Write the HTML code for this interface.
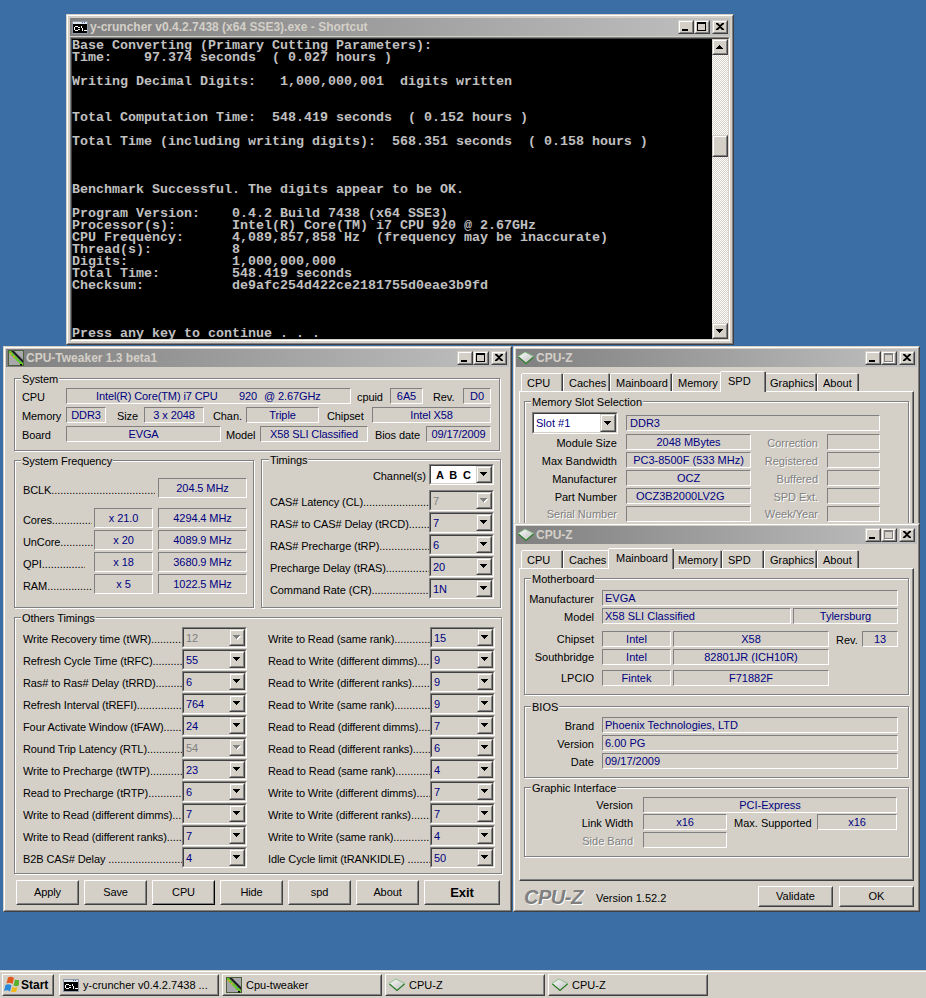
<!DOCTYPE html><html><head><meta charset="utf-8"><style>
html,body{margin:0;padding:0}
body{width:926px;height:998px;overflow:hidden;background:#3a6ea5;position:relative}
body div,body svg{position:absolute}
</style></head><body>
<div style="left:66px;top:14px;width:668px;height:331px;box-sizing:border-box;border-style:solid;border-width:1px;border-color:#d4d0c8 #404040 #404040 #d4d0c8;"><div style="position:absolute;left:0;top:0;right:0;bottom:0;border-style:solid;border-width:1px;border-color:#ffffff #808080 #808080 #ffffff;background:#d4d0c8"></div></div>
<div style="left:70px;top:18px;width:660px;height:18px;background:linear-gradient(to right,#808080,#c0c0c0);"></div>
<svg style="position:absolute;left:72px;top:19px" width="16" height="16" shape-rendering="crispEdges"><rect x="0" y="2" width="16" height="13" fill="#8e98a6"/><rect x="1" y="3" width="14" height="2" fill="#dfe6ee"/><rect x="10" y="3" width="1" height="1" fill="#4a6ab0"/><rect x="12" y="3" width="1" height="1" fill="#4a6ab0"/><rect x="1" y="5" width="14" height="9" fill="#000"/><path d="M3 7h3v1h-3zM2 8h1v3h-1zM3 11h3v1h-3zM6 8h1v1h-1zM6 10h1v1h-1zM7 8h1v1h-1zM7 10h1v1h-1zM9 7h1v2h-1zM10 9h1v3h-1zM12 11h3v1h-3z" fill="#fff"/></svg>
<div style="left:90px;top:21px;font:bold 12px 'Liberation Sans',sans-serif;line-height:13px;color:#d4d0c8;white-space:pre">y-cruncher v0.4.2.7438 (x64 SSE3).exe - Shortcut</div>
<div style="left:712px;top:20px;width:16px;height:14px;box-sizing:border-box;border-style:solid;border-width:1px;border-color:#d4d0c8 #404040 #404040 #d4d0c8;"><div style="position:absolute;left:0;top:0;right:0;bottom:0;border-style:solid;border-width:1px;border-color:#ffffff #808080 #808080 #ffffff;background:#d4d0c8"></div></div>
<svg style="position:absolute;left:716px;top:23px" width="8" height="7"><path d="M0 0h2l2 2 2-2h2v1l-3 2.5 3 2.5v1h-2l-2-2-2 2h-2v-1l3-2.5-3-2.5z" fill="#000"/></svg>
<div style="left:694px;top:20px;width:16px;height:14px;box-sizing:border-box;border-style:solid;border-width:1px;border-color:#d4d0c8 #404040 #404040 #d4d0c8;"><div style="position:absolute;left:0;top:0;right:0;bottom:0;border-style:solid;border-width:1px;border-color:#ffffff #808080 #808080 #ffffff;background:#d4d0c8"></div></div>
<div style="left:697px;top:22px;width:9px;height:9px;box-sizing:border-box;border:1px solid #000;border-top-width:2px"></div>
<div style="left:678px;top:20px;width:16px;height:14px;box-sizing:border-box;border-style:solid;border-width:1px;border-color:#d4d0c8 #404040 #404040 #d4d0c8;"><div style="position:absolute;left:0;top:0;right:0;bottom:0;border-style:solid;border-width:1px;border-color:#ffffff #808080 #808080 #ffffff;background:#d4d0c8"></div></div>
<div style="left:682px;top:29px;width:6px;height:2px;background:#000;"></div>
<div style="left:70px;top:37px;width:660px;height:304px;box-sizing:border-box;border-style:solid;border-width:1px;border-color:#808080 #ffffff #ffffff #808080;"><div style="position:absolute;left:0;top:0;right:0;bottom:0;border-style:solid;border-width:1px;border-color:#404040 #d4d0c8 #d4d0c8 #404040;background:#000"></div></div>
<div style="left:72px;top:40px;width:640px;height:299px;font:bold 13.33px 'Liberation Mono',monospace;line-height:12px;color:#c0c0c0;white-space:pre;overflow:hidden">Base Converting (Primary Cutting Parameters):
Time:    97.374 seconds  ( 0.027 hours )

Writing Decimal Digits:   1,000,000,001  digits written


Total Computation Time:  548.419 seconds  ( 0.152 hours )

Total Time (including writing digits):  568.351 seconds  ( 0.158 hours )



Benchmark Successful. The digits appear to be OK.

Program Version:    0.4.2 Build 7438 (x64 SSE3)
Processor(s):       Intel(R) Core(TM) i7 CPU 920 @ 2.67GHz
CPU Frequency:      4,089,857,858 Hz  (frequency may be inaccurate)
Thread(s):          8
Digits:             1,000,000,000
Total Time:         548.419 seconds
Checksum:           de9afc254d422ce2181755d0eae3b9fd



Press any key to continue . . .</div>
<div style="left:712px;top:39px;width:16px;height:300px;background:repeating-conic-gradient(#fff 0 25%,#d4d0c8 0 50%) 0 0/2px 2px;"></div>
<div style="left:712px;top:39px;width:16px;height:16px;box-sizing:border-box;border-style:solid;border-width:1px;border-color:#d4d0c8 #404040 #404040 #d4d0c8;"><div style="position:absolute;left:0;top:0;right:0;bottom:0;border-style:solid;border-width:1px;border-color:#ffffff #808080 #808080 #ffffff;background:#d4d0c8"></div></div>
<svg style="position:absolute;left:716px;top:45px" width="7" height="4"><polygon points="0,4 7,4 3.5,0" fill="#000" shape-rendering="crispEdges"/></svg>
<div style="left:712px;top:323px;width:16px;height:16px;box-sizing:border-box;border-style:solid;border-width:1px;border-color:#d4d0c8 #404040 #404040 #d4d0c8;"><div style="position:absolute;left:0;top:0;right:0;bottom:0;border-style:solid;border-width:1px;border-color:#ffffff #808080 #808080 #ffffff;background:#d4d0c8"></div></div>
<svg style="position:absolute;left:716px;top:329px" width="7" height="4"><path d="M0 0h7v1h-1v1h-1v1h-1v1h-1v-1h-1v-1h-1v-1h-1z" fill="#000"/></svg>
<div style="left:712px;top:135px;width:16px;height:22px;box-sizing:border-box;border-style:solid;border-width:1px;border-color:#d4d0c8 #404040 #404040 #d4d0c8;"><div style="position:absolute;left:0;top:0;right:0;bottom:0;border-style:solid;border-width:1px;border-color:#ffffff #808080 #808080 #ffffff;background:#d4d0c8"></div></div>
<div style="left:3px;top:346px;width:509px;height:566px;box-sizing:border-box;border-style:solid;border-width:1px;border-color:#d4d0c8 #404040 #404040 #d4d0c8;"><div style="position:absolute;left:0;top:0;right:0;bottom:0;border-style:solid;border-width:1px;border-color:#ffffff #808080 #808080 #ffffff;background:#d4d0c8"></div></div>
<div style="left:6px;top:349px;width:503px;height:18px;background:linear-gradient(to right,#808080,#c0c0c0);"></div>
<svg style="position:absolute;left:8px;top:350px" width="16" height="16"><rect x="0.5" y="0.5" width="15" height="15" fill="#a8a8ac" stroke="#4c5e3a"/><polygon points="1,1 3,1 15,13 15,15 13,15 1,3" fill="#64c828"/><polygon points="3,1 6,1 15,10 15,13" fill="#1c1c24"/><rect x="6" y="5" width="1" height="1" fill="#8aa080"/><rect x="9" y="8" width="1" height="1" fill="#8aa080"/><rect x="11" y="10" width="1" height="1" fill="#6080b0"/><rect x="2" y="3" width="1.5" height="1.5" fill="#f0a020"/><rect x="5" y="6" width="1.5" height="1.5" fill="#f0a020"/><rect x="12" y="14" width="2" height="1.5" fill="#000"/></svg>
<div style="left:26px;top:352px;font:bold 12px 'Liberation Sans',sans-serif;line-height:13px;color:#d4d0c8;white-space:pre">CPU-Tweaker 1.3 beta1</div>
<div style="left:491px;top:351px;width:16px;height:14px;box-sizing:border-box;border-style:solid;border-width:1px;border-color:#d4d0c8 #404040 #404040 #d4d0c8;"><div style="position:absolute;left:0;top:0;right:0;bottom:0;border-style:solid;border-width:1px;border-color:#ffffff #808080 #808080 #ffffff;background:#d4d0c8"></div></div>
<svg style="position:absolute;left:495px;top:354px" width="8" height="7"><path d="M0 0h2l2 2 2-2h2v1l-3 2.5 3 2.5v1h-2l-2-2-2 2h-2v-1l3-2.5-3-2.5z" fill="#000"/></svg>
<div style="left:473px;top:351px;width:16px;height:14px;box-sizing:border-box;border-style:solid;border-width:1px;border-color:#d4d0c8 #404040 #404040 #d4d0c8;"><div style="position:absolute;left:0;top:0;right:0;bottom:0;border-style:solid;border-width:1px;border-color:#ffffff #808080 #808080 #ffffff;background:#d4d0c8"></div></div>
<div style="left:476px;top:353px;width:9px;height:9px;box-sizing:border-box;border:1px solid #000;border-top-width:2px"></div>
<div style="left:457px;top:351px;width:16px;height:14px;box-sizing:border-box;border-style:solid;border-width:1px;border-color:#d4d0c8 #404040 #404040 #d4d0c8;"><div style="position:absolute;left:0;top:0;right:0;bottom:0;border-style:solid;border-width:1px;border-color:#ffffff #808080 #808080 #ffffff;background:#d4d0c8"></div></div>
<div style="left:461px;top:360px;width:6px;height:2px;background:#000;"></div>
<div style="left:15px;top:379px;width:486px;height:73px;box-sizing:border-box;border:1px solid #ffffff"></div>
<div style="left:14px;top:378px;width:486px;height:73px;box-sizing:border-box;border:1px solid #808080"></div>
<div style="left:21px;top:373px;height:13px;padding:0 1px;background:#d4d0c8;font:11px 'Liberation Sans',sans-serif;line-height:13px;color:#000;white-space:pre;letter-spacing:-0.1px">System</div>
<div style="left:22px;top:391px;font:11px 'Liberation Sans',sans-serif;line-height:13px;color:#000;white-space:pre;letter-spacing:-0.1px;">CPU</div>
<div style="left:66px;top:388px;width:285px;height:16px;box-sizing:border-box;border-style:solid;border-width:1px;border-color:#808080 #ffffff #ffffff #808080;"></div>
<div style="left:96px;top:390px;font:11px 'Liberation Sans',sans-serif;line-height:13px;color:#000080;white-space:pre;letter-spacing:-0.1px;">Intel(R) Core(TM) i7 CPU</div>
<div style="left:239px;top:390px;font:11px 'Liberation Sans',sans-serif;line-height:13px;color:#000080;white-space:pre;letter-spacing:-0.1px;">920</div>
<div style="left:264px;top:390px;font:11px 'Liberation Sans',sans-serif;line-height:13px;color:#000080;white-space:pre;letter-spacing:-0.1px;">@ 2.67GHz</div>
<div style="left:357px;top:391px;font:11px 'Liberation Sans',sans-serif;line-height:13px;color:#000;white-space:pre;letter-spacing:-0.1px;">cpuid</div>
<div style="left:390px;top:388px;width:33px;height:16px;box-sizing:border-box;border-style:solid;border-width:1px;border-color:#808080 #ffffff #ffffff #808080;"></div>
<div style="left:390px;top:390px;font:11px 'Liberation Sans',sans-serif;line-height:13px;color:#000080;white-space:pre;letter-spacing:-0.1px;width:33px;text-align:center;">6A5</div>
<div style="left:433px;top:391px;font:11px 'Liberation Sans',sans-serif;line-height:13px;color:#000;white-space:pre;letter-spacing:-0.1px;">Rev.</div>
<div style="left:463px;top:388px;width:28px;height:16px;box-sizing:border-box;border-style:solid;border-width:1px;border-color:#808080 #ffffff #ffffff #808080;"></div>
<div style="left:463px;top:390px;font:11px 'Liberation Sans',sans-serif;line-height:13px;color:#000080;white-space:pre;letter-spacing:-0.1px;width:28px;text-align:center;">D0</div>
<div style="left:22px;top:410px;font:11px 'Liberation Sans',sans-serif;line-height:13px;color:#000;white-space:pre;letter-spacing:-0.1px;">Memory</div>
<div style="left:66px;top:407px;width:40px;height:16px;box-sizing:border-box;border-style:solid;border-width:1px;border-color:#808080 #ffffff #ffffff #808080;"></div>
<div style="left:66px;top:409px;font:11px 'Liberation Sans',sans-serif;line-height:13px;color:#000080;white-space:pre;letter-spacing:-0.1px;width:40px;text-align:center;">DDR3</div>
<div style="left:117px;top:410px;font:11px 'Liberation Sans',sans-serif;line-height:13px;color:#000;white-space:pre;letter-spacing:-0.1px;">Size</div>
<div style="left:144px;top:407px;width:60px;height:16px;box-sizing:border-box;border-style:solid;border-width:1px;border-color:#808080 #ffffff #ffffff #808080;"></div>
<div style="left:144px;top:409px;font:11px 'Liberation Sans',sans-serif;line-height:13px;color:#000080;white-space:pre;letter-spacing:-0.1px;width:60px;text-align:center;">3 x 2048</div>
<div style="left:213px;top:410px;font:11px 'Liberation Sans',sans-serif;line-height:13px;color:#000;white-space:pre;letter-spacing:-0.1px;">Chan.</div>
<div style="left:246px;top:407px;width:73px;height:16px;box-sizing:border-box;border-style:solid;border-width:1px;border-color:#808080 #ffffff #ffffff #808080;"></div>
<div style="left:246px;top:409px;font:11px 'Liberation Sans',sans-serif;line-height:13px;color:#000080;white-space:pre;letter-spacing:-0.1px;width:73px;text-align:center;">Triple</div>
<div style="left:327px;top:410px;font:11px 'Liberation Sans',sans-serif;line-height:13px;color:#000;white-space:pre;letter-spacing:-0.1px;">Chipset</div>
<div style="left:372px;top:407px;width:119px;height:16px;box-sizing:border-box;border-style:solid;border-width:1px;border-color:#808080 #ffffff #ffffff #808080;"></div>
<div style="left:372px;top:409px;font:11px 'Liberation Sans',sans-serif;line-height:13px;color:#000080;white-space:pre;letter-spacing:-0.1px;width:119px;text-align:center;">Intel X58</div>
<div style="left:22px;top:429px;font:11px 'Liberation Sans',sans-serif;line-height:13px;color:#000;white-space:pre;letter-spacing:-0.1px;">Board</div>
<div style="left:66px;top:426px;width:155px;height:16px;box-sizing:border-box;border-style:solid;border-width:1px;border-color:#808080 #ffffff #ffffff #808080;"></div>
<div style="left:66px;top:428px;font:11px 'Liberation Sans',sans-serif;line-height:13px;color:#000080;white-space:pre;letter-spacing:-0.1px;width:155px;text-align:center;">EVGA</div>
<div style="left:226px;top:429px;font:11px 'Liberation Sans',sans-serif;line-height:13px;color:#000;white-space:pre;letter-spacing:-0.1px;">Model</div>
<div style="left:260px;top:426px;width:108px;height:16px;box-sizing:border-box;border-style:solid;border-width:1px;border-color:#808080 #ffffff #ffffff #808080;"></div>
<div style="left:260px;top:428px;font:11px 'Liberation Sans',sans-serif;line-height:13px;color:#000080;white-space:pre;letter-spacing:-0.1px;width:108px;text-align:center;">X58 SLI Classified</div>
<div style="left:375px;top:429px;font:11px 'Liberation Sans',sans-serif;line-height:13px;color:#000;white-space:pre;letter-spacing:-0.1px;">Bios date</div>
<div style="left:426px;top:426px;width:65px;height:16px;box-sizing:border-box;border-style:solid;border-width:1px;border-color:#808080 #ffffff #ffffff #808080;"></div>
<div style="left:426px;top:428px;font:11px 'Liberation Sans',sans-serif;line-height:13px;color:#000080;white-space:pre;letter-spacing:-0.1px;width:65px;text-align:center;">09/17/2009</div>
<div style="left:15px;top:461px;width:240px;height:148px;box-sizing:border-box;border:1px solid #ffffff"></div>
<div style="left:14px;top:460px;width:240px;height:148px;box-sizing:border-box;border:1px solid #808080"></div>
<div style="left:21px;top:455px;height:13px;padding:0 1px;background:#d4d0c8;font:11px 'Liberation Sans',sans-serif;line-height:13px;color:#000;white-space:pre;letter-spacing:-0.1px">System Frequency</div>
<div style="left:23px;top:484px;width:132px;overflow:hidden;font:11px 'Liberation Sans',sans-serif;line-height:13px;color:#000;white-space:pre"><span style="letter-spacing:-0.1px">BCLK</span><span style="letter-spacing:-0.06px">................................................................................</span></div>
<div style="left:158px;top:478px;width:89px;height:20px;box-sizing:border-box;border-style:solid;border-width:1px;border-color:#808080 #ffffff #ffffff #808080;"></div>
<div style="left:158px;top:482px;font:11px 'Liberation Sans',sans-serif;line-height:13px;color:#000080;white-space:pre;letter-spacing:-0.1px;width:89px;text-align:center;">204.5 MHz</div>
<div style="left:23px;top:514px;width:69px;overflow:hidden;font:11px 'Liberation Sans',sans-serif;line-height:13px;color:#000;white-space:pre"><span style="letter-spacing:-0.1px">Cores</span><span style="letter-spacing:-0.06px">................................................................................</span></div>
<div style="left:94px;top:508px;width:59px;height:20px;box-sizing:border-box;border-style:solid;border-width:1px;border-color:#808080 #ffffff #ffffff #808080;"></div>
<div style="left:94px;top:512px;font:11px 'Liberation Sans',sans-serif;line-height:13px;color:#000080;white-space:pre;letter-spacing:-0.1px;width:59px;text-align:center;">x 21.0</div>
<div style="left:158px;top:508px;width:89px;height:20px;box-sizing:border-box;border-style:solid;border-width:1px;border-color:#808080 #ffffff #ffffff #808080;"></div>
<div style="left:158px;top:512px;font:11px 'Liberation Sans',sans-serif;line-height:13px;color:#000080;white-space:pre;letter-spacing:-0.1px;width:89px;text-align:center;">4294.4 MHz</div>
<div style="left:23px;top:536px;width:70px;overflow:hidden;font:11px 'Liberation Sans',sans-serif;line-height:13px;color:#000;white-space:pre"><span style="letter-spacing:-0.1px">UnCore</span><span style="letter-spacing:-0.06px">................................................................................</span></div>
<div style="left:94px;top:530px;width:59px;height:20px;box-sizing:border-box;border-style:solid;border-width:1px;border-color:#808080 #ffffff #ffffff #808080;"></div>
<div style="left:94px;top:534px;font:11px 'Liberation Sans',sans-serif;line-height:13px;color:#000080;white-space:pre;letter-spacing:-0.1px;width:59px;text-align:center;">x 20</div>
<div style="left:158px;top:530px;width:89px;height:20px;box-sizing:border-box;border-style:solid;border-width:1px;border-color:#808080 #ffffff #ffffff #808080;"></div>
<div style="left:158px;top:534px;font:11px 'Liberation Sans',sans-serif;line-height:13px;color:#000080;white-space:pre;letter-spacing:-0.1px;width:89px;text-align:center;">4089.9 MHz</div>
<div style="left:23px;top:558px;width:62px;overflow:hidden;font:11px 'Liberation Sans',sans-serif;line-height:13px;color:#000;white-space:pre"><span style="letter-spacing:-0.1px">QPI</span><span style="letter-spacing:-0.06px">................................................................................</span></div>
<div style="left:94px;top:552px;width:59px;height:20px;box-sizing:border-box;border-style:solid;border-width:1px;border-color:#808080 #ffffff #ffffff #808080;"></div>
<div style="left:94px;top:556px;font:11px 'Liberation Sans',sans-serif;line-height:13px;color:#000080;white-space:pre;letter-spacing:-0.1px;width:59px;text-align:center;">x 18</div>
<div style="left:158px;top:552px;width:89px;height:20px;box-sizing:border-box;border-style:solid;border-width:1px;border-color:#808080 #ffffff #ffffff #808080;"></div>
<div style="left:158px;top:556px;font:11px 'Liberation Sans',sans-serif;line-height:13px;color:#000080;white-space:pre;letter-spacing:-0.1px;width:89px;text-align:center;">3680.9 MHz</div>
<div style="left:23px;top:580px;width:69px;overflow:hidden;font:11px 'Liberation Sans',sans-serif;line-height:13px;color:#000;white-space:pre"><span style="letter-spacing:-0.1px">RAM</span><span style="letter-spacing:-0.06px">................................................................................</span></div>
<div style="left:94px;top:574px;width:59px;height:20px;box-sizing:border-box;border-style:solid;border-width:1px;border-color:#808080 #ffffff #ffffff #808080;"></div>
<div style="left:94px;top:578px;font:11px 'Liberation Sans',sans-serif;line-height:13px;color:#000080;white-space:pre;letter-spacing:-0.1px;width:59px;text-align:center;">x 5</div>
<div style="left:158px;top:574px;width:89px;height:20px;box-sizing:border-box;border-style:solid;border-width:1px;border-color:#808080 #ffffff #ffffff #808080;"></div>
<div style="left:158px;top:578px;font:11px 'Liberation Sans',sans-serif;line-height:13px;color:#000080;white-space:pre;letter-spacing:-0.1px;width:89px;text-align:center;">1022.5 MHz</div>
<div style="left:262px;top:460px;width:240px;height:149px;box-sizing:border-box;border:1px solid #ffffff"></div>
<div style="left:261px;top:459px;width:240px;height:149px;box-sizing:border-box;border:1px solid #808080"></div>
<div style="left:269px;top:454px;height:13px;padding:0 1px;background:#d4d0c8;font:11px 'Liberation Sans',sans-serif;line-height:13px;color:#000;white-space:pre;letter-spacing:-0.1px">Timings</div>
<div style="left:373px;top:470px;font:11px 'Liberation Sans',sans-serif;line-height:13px;color:#000;white-space:pre;letter-spacing:-0.1px;">Channel(s)</div>
<div style="left:429px;top:464px;width:65px;height:21px;box-sizing:border-box;border-style:solid;border-width:1px;border-color:#808080 #ffffff #ffffff #808080;"><div style="position:absolute;left:0;top:0;right:0;bottom:0;border-style:solid;border-width:1px;border-color:#404040 #d4d0c8 #d4d0c8 #404040;background:#ffffff"></div></div>
<div style="left:476px;top:466px;width:16px;height:17px;box-sizing:border-box;border-style:solid;border-width:1px;border-color:#d4d0c8 #404040 #404040 #d4d0c8;"><div style="position:absolute;left:0;top:0;right:0;bottom:0;border-style:solid;border-width:1px;border-color:#ffffff #808080 #808080 #ffffff;background:#d4d0c8"></div></div>
<svg style="position:absolute;left:480px;top:472px" width="7" height="4"><path d="M0 0h7v1h-1v1h-1v1h-1v1h-1v-1h-1v-1h-1v-1h-1z" fill="#000" shape-rendering="crispEdges"/></svg>
<div style="left:436px;top:469px;font:bold 11px 'Liberation Sans',sans-serif;line-height:13px;color:#000;white-space:pre;letter-spacing:-0.1px;">A  B  C</div>
<div style="left:270px;top:496px;width:159px;overflow:hidden;font:11px 'Liberation Sans',sans-serif;line-height:13px;color:#000;white-space:pre"><span style="letter-spacing:-0.1px">CAS# Latency (CL)</span><span style="letter-spacing:-0.06px">................................................................................</span></div>
<div style="left:429px;top:490px;width:65px;height:21px;box-sizing:border-box;border-style:solid;border-width:1px;border-color:#808080 #ffffff #ffffff #808080;"><div style="position:absolute;left:0;top:0;right:0;bottom:0;border-style:solid;border-width:1px;border-color:#404040 #d4d0c8 #d4d0c8 #404040;background:#d4d0c8"></div></div>
<div style="left:476px;top:492px;width:16px;height:17px;box-sizing:border-box;border-style:solid;border-width:1px;border-color:#d4d0c8 #404040 #404040 #d4d0c8;"><div style="position:absolute;left:0;top:0;right:0;bottom:0;border-style:solid;border-width:1px;border-color:#ffffff #808080 #808080 #ffffff;background:#d4d0c8"></div></div>
<svg style="position:absolute;left:480px;top:498px" width="9" height="5"><path d="M1 1h7v1h-1v1h-1v1h-1v1h-1v-1" fill="#fff" shape-rendering="crispEdges"/><path d="M0 0h7v1h-1v1h-1v1h-1v1h-1v-1h-1v-1h-1v-1h-1z" fill="#808080" shape-rendering="crispEdges"/></svg>
<div style="left:433px;top:495px;font:11px 'Liberation Sans',sans-serif;line-height:13px;color:#808080;white-space:pre;letter-spacing:-0.1px;">7</div>
<div style="left:270px;top:518px;width:159px;overflow:hidden;font:11px 'Liberation Sans',sans-serif;line-height:13px;color:#000;white-space:pre"><span style="letter-spacing:-0.1px">RAS# to CAS# Delay (tRCD)</span><span style="letter-spacing:-0.06px">................................................................................</span></div>
<div style="left:429px;top:512px;width:65px;height:21px;box-sizing:border-box;border-style:solid;border-width:1px;border-color:#808080 #ffffff #ffffff #808080;"><div style="position:absolute;left:0;top:0;right:0;bottom:0;border-style:solid;border-width:1px;border-color:#404040 #d4d0c8 #d4d0c8 #404040;background:#d4d0c8"></div></div>
<div style="left:476px;top:514px;width:16px;height:17px;box-sizing:border-box;border-style:solid;border-width:1px;border-color:#d4d0c8 #404040 #404040 #d4d0c8;"><div style="position:absolute;left:0;top:0;right:0;bottom:0;border-style:solid;border-width:1px;border-color:#ffffff #808080 #808080 #ffffff;background:#d4d0c8"></div></div>
<svg style="position:absolute;left:480px;top:520px" width="7" height="4"><path d="M0 0h7v1h-1v1h-1v1h-1v1h-1v-1h-1v-1h-1v-1h-1z" fill="#000" shape-rendering="crispEdges"/></svg>
<div style="left:433px;top:517px;font:11px 'Liberation Sans',sans-serif;line-height:13px;color:#000080;white-space:pre;letter-spacing:-0.1px;">7</div>
<div style="left:270px;top:540px;width:159px;overflow:hidden;font:11px 'Liberation Sans',sans-serif;line-height:13px;color:#000;white-space:pre"><span style="letter-spacing:-0.1px">RAS# Precharge (tRP)</span><span style="letter-spacing:-0.06px">................................................................................</span></div>
<div style="left:429px;top:534px;width:65px;height:21px;box-sizing:border-box;border-style:solid;border-width:1px;border-color:#808080 #ffffff #ffffff #808080;"><div style="position:absolute;left:0;top:0;right:0;bottom:0;border-style:solid;border-width:1px;border-color:#404040 #d4d0c8 #d4d0c8 #404040;background:#d4d0c8"></div></div>
<div style="left:476px;top:536px;width:16px;height:17px;box-sizing:border-box;border-style:solid;border-width:1px;border-color:#d4d0c8 #404040 #404040 #d4d0c8;"><div style="position:absolute;left:0;top:0;right:0;bottom:0;border-style:solid;border-width:1px;border-color:#ffffff #808080 #808080 #ffffff;background:#d4d0c8"></div></div>
<svg style="position:absolute;left:480px;top:542px" width="7" height="4"><path d="M0 0h7v1h-1v1h-1v1h-1v1h-1v-1h-1v-1h-1v-1h-1z" fill="#000" shape-rendering="crispEdges"/></svg>
<div style="left:433px;top:539px;font:11px 'Liberation Sans',sans-serif;line-height:13px;color:#000080;white-space:pre;letter-spacing:-0.1px;">6</div>
<div style="left:270px;top:562px;width:159px;overflow:hidden;font:11px 'Liberation Sans',sans-serif;line-height:13px;color:#000;white-space:pre"><span style="letter-spacing:-0.1px">Precharge Delay (tRAS)</span><span style="letter-spacing:-0.06px">................................................................................</span></div>
<div style="left:429px;top:556px;width:65px;height:21px;box-sizing:border-box;border-style:solid;border-width:1px;border-color:#808080 #ffffff #ffffff #808080;"><div style="position:absolute;left:0;top:0;right:0;bottom:0;border-style:solid;border-width:1px;border-color:#404040 #d4d0c8 #d4d0c8 #404040;background:#d4d0c8"></div></div>
<div style="left:476px;top:558px;width:16px;height:17px;box-sizing:border-box;border-style:solid;border-width:1px;border-color:#d4d0c8 #404040 #404040 #d4d0c8;"><div style="position:absolute;left:0;top:0;right:0;bottom:0;border-style:solid;border-width:1px;border-color:#ffffff #808080 #808080 #ffffff;background:#d4d0c8"></div></div>
<svg style="position:absolute;left:480px;top:564px" width="7" height="4"><path d="M0 0h7v1h-1v1h-1v1h-1v1h-1v-1h-1v-1h-1v-1h-1z" fill="#000" shape-rendering="crispEdges"/></svg>
<div style="left:433px;top:561px;font:11px 'Liberation Sans',sans-serif;line-height:13px;color:#000080;white-space:pre;letter-spacing:-0.1px;">20</div>
<div style="left:270px;top:584px;width:159px;overflow:hidden;font:11px 'Liberation Sans',sans-serif;line-height:13px;color:#000;white-space:pre"><span style="letter-spacing:-0.1px">Command Rate (CR)</span><span style="letter-spacing:-0.06px">................................................................................</span></div>
<div style="left:429px;top:578px;width:65px;height:21px;box-sizing:border-box;border-style:solid;border-width:1px;border-color:#808080 #ffffff #ffffff #808080;"><div style="position:absolute;left:0;top:0;right:0;bottom:0;border-style:solid;border-width:1px;border-color:#404040 #d4d0c8 #d4d0c8 #404040;background:#d4d0c8"></div></div>
<div style="left:476px;top:580px;width:16px;height:17px;box-sizing:border-box;border-style:solid;border-width:1px;border-color:#d4d0c8 #404040 #404040 #d4d0c8;"><div style="position:absolute;left:0;top:0;right:0;bottom:0;border-style:solid;border-width:1px;border-color:#ffffff #808080 #808080 #ffffff;background:#d4d0c8"></div></div>
<svg style="position:absolute;left:480px;top:586px" width="7" height="4"><path d="M0 0h7v1h-1v1h-1v1h-1v1h-1v-1h-1v-1h-1v-1h-1z" fill="#000" shape-rendering="crispEdges"/></svg>
<div style="left:433px;top:583px;font:11px 'Liberation Sans',sans-serif;line-height:13px;color:#000080;white-space:pre;letter-spacing:-0.1px;">1N</div>
<div style="left:15px;top:618px;width:488px;height:257px;box-sizing:border-box;border:1px solid #ffffff"></div>
<div style="left:14px;top:617px;width:488px;height:257px;box-sizing:border-box;border:1px solid #808080"></div>
<div style="left:21px;top:612px;height:13px;padding:0 1px;background:#d4d0c8;font:11px 'Liberation Sans',sans-serif;line-height:13px;color:#000;white-space:pre;letter-spacing:-0.1px">Others Timings</div>
<div style="left:23px;top:633px;width:159px;overflow:hidden;font:11px 'Liberation Sans',sans-serif;line-height:13px;color:#000;white-space:pre"><span style="letter-spacing:-0.1px">Write Recovery time (tWR)</span><span style="letter-spacing:-0.06px">................................................................................</span></div>
<div style="left:182px;top:627px;width:65px;height:21px;box-sizing:border-box;border-style:solid;border-width:1px;border-color:#808080 #ffffff #ffffff #808080;"><div style="position:absolute;left:0;top:0;right:0;bottom:0;border-style:solid;border-width:1px;border-color:#404040 #d4d0c8 #d4d0c8 #404040;background:#d4d0c8"></div></div>
<div style="left:229px;top:629px;width:16px;height:17px;box-sizing:border-box;border-style:solid;border-width:1px;border-color:#d4d0c8 #404040 #404040 #d4d0c8;"><div style="position:absolute;left:0;top:0;right:0;bottom:0;border-style:solid;border-width:1px;border-color:#ffffff #808080 #808080 #ffffff;background:#d4d0c8"></div></div>
<svg style="position:absolute;left:233px;top:635px" width="9" height="5"><path d="M1 1h7v1h-1v1h-1v1h-1v1h-1v-1" fill="#fff" shape-rendering="crispEdges"/><path d="M0 0h7v1h-1v1h-1v1h-1v1h-1v-1h-1v-1h-1v-1h-1z" fill="#808080" shape-rendering="crispEdges"/></svg>
<div style="left:186px;top:632px;font:11px 'Liberation Sans',sans-serif;line-height:13px;color:#808080;white-space:pre;letter-spacing:-0.1px;">12</div>
<div style="left:23px;top:655px;width:159px;overflow:hidden;font:11px 'Liberation Sans',sans-serif;line-height:13px;color:#000;white-space:pre"><span style="letter-spacing:-0.1px">Refresh Cycle Time (tRFC)</span><span style="letter-spacing:-0.06px">................................................................................</span></div>
<div style="left:182px;top:649px;width:65px;height:21px;box-sizing:border-box;border-style:solid;border-width:1px;border-color:#808080 #ffffff #ffffff #808080;"><div style="position:absolute;left:0;top:0;right:0;bottom:0;border-style:solid;border-width:1px;border-color:#404040 #d4d0c8 #d4d0c8 #404040;background:#d4d0c8"></div></div>
<div style="left:229px;top:651px;width:16px;height:17px;box-sizing:border-box;border-style:solid;border-width:1px;border-color:#d4d0c8 #404040 #404040 #d4d0c8;"><div style="position:absolute;left:0;top:0;right:0;bottom:0;border-style:solid;border-width:1px;border-color:#ffffff #808080 #808080 #ffffff;background:#d4d0c8"></div></div>
<svg style="position:absolute;left:233px;top:657px" width="7" height="4"><path d="M0 0h7v1h-1v1h-1v1h-1v1h-1v-1h-1v-1h-1v-1h-1z" fill="#000" shape-rendering="crispEdges"/></svg>
<div style="left:186px;top:654px;font:11px 'Liberation Sans',sans-serif;line-height:13px;color:#000080;white-space:pre;letter-spacing:-0.1px;">55</div>
<div style="left:23px;top:677px;width:159px;overflow:hidden;font:11px 'Liberation Sans',sans-serif;line-height:13px;color:#000;white-space:pre"><span style="letter-spacing:-0.1px">Ras# to Ras# Delay (tRRD)</span><span style="letter-spacing:-0.06px">................................................................................</span></div>
<div style="left:182px;top:671px;width:65px;height:21px;box-sizing:border-box;border-style:solid;border-width:1px;border-color:#808080 #ffffff #ffffff #808080;"><div style="position:absolute;left:0;top:0;right:0;bottom:0;border-style:solid;border-width:1px;border-color:#404040 #d4d0c8 #d4d0c8 #404040;background:#d4d0c8"></div></div>
<div style="left:229px;top:673px;width:16px;height:17px;box-sizing:border-box;border-style:solid;border-width:1px;border-color:#d4d0c8 #404040 #404040 #d4d0c8;"><div style="position:absolute;left:0;top:0;right:0;bottom:0;border-style:solid;border-width:1px;border-color:#ffffff #808080 #808080 #ffffff;background:#d4d0c8"></div></div>
<svg style="position:absolute;left:233px;top:679px" width="7" height="4"><path d="M0 0h7v1h-1v1h-1v1h-1v1h-1v-1h-1v-1h-1v-1h-1z" fill="#000" shape-rendering="crispEdges"/></svg>
<div style="left:186px;top:676px;font:11px 'Liberation Sans',sans-serif;line-height:13px;color:#000080;white-space:pre;letter-spacing:-0.1px;">6</div>
<div style="left:23px;top:699px;width:159px;overflow:hidden;font:11px 'Liberation Sans',sans-serif;line-height:13px;color:#000;white-space:pre"><span style="letter-spacing:-0.1px">Refresh Interval (tREFI)</span><span style="letter-spacing:-0.06px">................................................................................</span></div>
<div style="left:182px;top:693px;width:65px;height:21px;box-sizing:border-box;border-style:solid;border-width:1px;border-color:#808080 #ffffff #ffffff #808080;"><div style="position:absolute;left:0;top:0;right:0;bottom:0;border-style:solid;border-width:1px;border-color:#404040 #d4d0c8 #d4d0c8 #404040;background:#d4d0c8"></div></div>
<div style="left:229px;top:695px;width:16px;height:17px;box-sizing:border-box;border-style:solid;border-width:1px;border-color:#d4d0c8 #404040 #404040 #d4d0c8;"><div style="position:absolute;left:0;top:0;right:0;bottom:0;border-style:solid;border-width:1px;border-color:#ffffff #808080 #808080 #ffffff;background:#d4d0c8"></div></div>
<svg style="position:absolute;left:233px;top:701px" width="7" height="4"><path d="M0 0h7v1h-1v1h-1v1h-1v1h-1v-1h-1v-1h-1v-1h-1z" fill="#000" shape-rendering="crispEdges"/></svg>
<div style="left:186px;top:698px;font:11px 'Liberation Sans',sans-serif;line-height:13px;color:#000080;white-space:pre;letter-spacing:-0.1px;">764</div>
<div style="left:23px;top:721px;width:159px;overflow:hidden;font:11px 'Liberation Sans',sans-serif;line-height:13px;color:#000;white-space:pre"><span style="letter-spacing:-0.1px">Four Activate Window (tFAW)</span><span style="letter-spacing:-0.06px">................................................................................</span></div>
<div style="left:182px;top:715px;width:65px;height:21px;box-sizing:border-box;border-style:solid;border-width:1px;border-color:#808080 #ffffff #ffffff #808080;"><div style="position:absolute;left:0;top:0;right:0;bottom:0;border-style:solid;border-width:1px;border-color:#404040 #d4d0c8 #d4d0c8 #404040;background:#d4d0c8"></div></div>
<div style="left:229px;top:717px;width:16px;height:17px;box-sizing:border-box;border-style:solid;border-width:1px;border-color:#d4d0c8 #404040 #404040 #d4d0c8;"><div style="position:absolute;left:0;top:0;right:0;bottom:0;border-style:solid;border-width:1px;border-color:#ffffff #808080 #808080 #ffffff;background:#d4d0c8"></div></div>
<svg style="position:absolute;left:233px;top:723px" width="7" height="4"><path d="M0 0h7v1h-1v1h-1v1h-1v1h-1v-1h-1v-1h-1v-1h-1z" fill="#000" shape-rendering="crispEdges"/></svg>
<div style="left:186px;top:720px;font:11px 'Liberation Sans',sans-serif;line-height:13px;color:#000080;white-space:pre;letter-spacing:-0.1px;">24</div>
<div style="left:23px;top:743px;width:159px;overflow:hidden;font:11px 'Liberation Sans',sans-serif;line-height:13px;color:#000;white-space:pre"><span style="letter-spacing:-0.1px">Round Trip Latency (RTL)</span><span style="letter-spacing:-0.06px">................................................................................</span></div>
<div style="left:182px;top:737px;width:65px;height:21px;box-sizing:border-box;border-style:solid;border-width:1px;border-color:#808080 #ffffff #ffffff #808080;"><div style="position:absolute;left:0;top:0;right:0;bottom:0;border-style:solid;border-width:1px;border-color:#404040 #d4d0c8 #d4d0c8 #404040;background:#d4d0c8"></div></div>
<div style="left:229px;top:739px;width:16px;height:17px;box-sizing:border-box;border-style:solid;border-width:1px;border-color:#d4d0c8 #404040 #404040 #d4d0c8;"><div style="position:absolute;left:0;top:0;right:0;bottom:0;border-style:solid;border-width:1px;border-color:#ffffff #808080 #808080 #ffffff;background:#d4d0c8"></div></div>
<svg style="position:absolute;left:233px;top:745px" width="9" height="5"><path d="M1 1h7v1h-1v1h-1v1h-1v1h-1v-1" fill="#fff" shape-rendering="crispEdges"/><path d="M0 0h7v1h-1v1h-1v1h-1v1h-1v-1h-1v-1h-1v-1h-1z" fill="#808080" shape-rendering="crispEdges"/></svg>
<div style="left:186px;top:742px;font:11px 'Liberation Sans',sans-serif;line-height:13px;color:#808080;white-space:pre;letter-spacing:-0.1px;">54</div>
<div style="left:23px;top:765px;width:159px;overflow:hidden;font:11px 'Liberation Sans',sans-serif;line-height:13px;color:#000;white-space:pre"><span style="letter-spacing:-0.1px">Write to Precharge (tWTP)</span><span style="letter-spacing:-0.06px">................................................................................</span></div>
<div style="left:182px;top:759px;width:65px;height:21px;box-sizing:border-box;border-style:solid;border-width:1px;border-color:#808080 #ffffff #ffffff #808080;"><div style="position:absolute;left:0;top:0;right:0;bottom:0;border-style:solid;border-width:1px;border-color:#404040 #d4d0c8 #d4d0c8 #404040;background:#d4d0c8"></div></div>
<div style="left:229px;top:761px;width:16px;height:17px;box-sizing:border-box;border-style:solid;border-width:1px;border-color:#d4d0c8 #404040 #404040 #d4d0c8;"><div style="position:absolute;left:0;top:0;right:0;bottom:0;border-style:solid;border-width:1px;border-color:#ffffff #808080 #808080 #ffffff;background:#d4d0c8"></div></div>
<svg style="position:absolute;left:233px;top:767px" width="7" height="4"><path d="M0 0h7v1h-1v1h-1v1h-1v1h-1v-1h-1v-1h-1v-1h-1z" fill="#000" shape-rendering="crispEdges"/></svg>
<div style="left:186px;top:764px;font:11px 'Liberation Sans',sans-serif;line-height:13px;color:#000080;white-space:pre;letter-spacing:-0.1px;">23</div>
<div style="left:23px;top:787px;width:159px;overflow:hidden;font:11px 'Liberation Sans',sans-serif;line-height:13px;color:#000;white-space:pre"><span style="letter-spacing:-0.1px">Read to Precharge (tRTP)</span><span style="letter-spacing:-0.06px">................................................................................</span></div>
<div style="left:182px;top:781px;width:65px;height:21px;box-sizing:border-box;border-style:solid;border-width:1px;border-color:#808080 #ffffff #ffffff #808080;"><div style="position:absolute;left:0;top:0;right:0;bottom:0;border-style:solid;border-width:1px;border-color:#404040 #d4d0c8 #d4d0c8 #404040;background:#d4d0c8"></div></div>
<div style="left:229px;top:783px;width:16px;height:17px;box-sizing:border-box;border-style:solid;border-width:1px;border-color:#d4d0c8 #404040 #404040 #d4d0c8;"><div style="position:absolute;left:0;top:0;right:0;bottom:0;border-style:solid;border-width:1px;border-color:#ffffff #808080 #808080 #ffffff;background:#d4d0c8"></div></div>
<svg style="position:absolute;left:233px;top:789px" width="7" height="4"><path d="M0 0h7v1h-1v1h-1v1h-1v1h-1v-1h-1v-1h-1v-1h-1z" fill="#000" shape-rendering="crispEdges"/></svg>
<div style="left:186px;top:786px;font:11px 'Liberation Sans',sans-serif;line-height:13px;color:#000080;white-space:pre;letter-spacing:-0.1px;">6</div>
<div style="left:23px;top:809px;width:159px;overflow:hidden;font:11px 'Liberation Sans',sans-serif;line-height:13px;color:#000;white-space:pre"><span style="letter-spacing:-0.1px">Write to Read (different dimms)</span><span style="letter-spacing:-0.06px">................................................................................</span></div>
<div style="left:182px;top:803px;width:65px;height:21px;box-sizing:border-box;border-style:solid;border-width:1px;border-color:#808080 #ffffff #ffffff #808080;"><div style="position:absolute;left:0;top:0;right:0;bottom:0;border-style:solid;border-width:1px;border-color:#404040 #d4d0c8 #d4d0c8 #404040;background:#d4d0c8"></div></div>
<div style="left:229px;top:805px;width:16px;height:17px;box-sizing:border-box;border-style:solid;border-width:1px;border-color:#d4d0c8 #404040 #404040 #d4d0c8;"><div style="position:absolute;left:0;top:0;right:0;bottom:0;border-style:solid;border-width:1px;border-color:#ffffff #808080 #808080 #ffffff;background:#d4d0c8"></div></div>
<svg style="position:absolute;left:233px;top:811px" width="7" height="4"><path d="M0 0h7v1h-1v1h-1v1h-1v1h-1v-1h-1v-1h-1v-1h-1z" fill="#000" shape-rendering="crispEdges"/></svg>
<div style="left:186px;top:808px;font:11px 'Liberation Sans',sans-serif;line-height:13px;color:#000080;white-space:pre;letter-spacing:-0.1px;">7</div>
<div style="left:23px;top:831px;width:159px;overflow:hidden;font:11px 'Liberation Sans',sans-serif;line-height:13px;color:#000;white-space:pre"><span style="letter-spacing:-0.1px">Write to Read (different ranks)</span><span style="letter-spacing:-0.06px">................................................................................</span></div>
<div style="left:182px;top:825px;width:65px;height:21px;box-sizing:border-box;border-style:solid;border-width:1px;border-color:#808080 #ffffff #ffffff #808080;"><div style="position:absolute;left:0;top:0;right:0;bottom:0;border-style:solid;border-width:1px;border-color:#404040 #d4d0c8 #d4d0c8 #404040;background:#d4d0c8"></div></div>
<div style="left:229px;top:827px;width:16px;height:17px;box-sizing:border-box;border-style:solid;border-width:1px;border-color:#d4d0c8 #404040 #404040 #d4d0c8;"><div style="position:absolute;left:0;top:0;right:0;bottom:0;border-style:solid;border-width:1px;border-color:#ffffff #808080 #808080 #ffffff;background:#d4d0c8"></div></div>
<svg style="position:absolute;left:233px;top:833px" width="7" height="4"><path d="M0 0h7v1h-1v1h-1v1h-1v1h-1v-1h-1v-1h-1v-1h-1z" fill="#000" shape-rendering="crispEdges"/></svg>
<div style="left:186px;top:830px;font:11px 'Liberation Sans',sans-serif;line-height:13px;color:#000080;white-space:pre;letter-spacing:-0.1px;">7</div>
<div style="left:23px;top:853px;width:159px;overflow:hidden;font:11px 'Liberation Sans',sans-serif;line-height:13px;color:#000;white-space:pre"><span style="letter-spacing:-0.1px">B2B CAS# Delay </span><span style="letter-spacing:-0.06px">................................................................................</span></div>
<div style="left:182px;top:847px;width:65px;height:21px;box-sizing:border-box;border-style:solid;border-width:1px;border-color:#808080 #ffffff #ffffff #808080;"><div style="position:absolute;left:0;top:0;right:0;bottom:0;border-style:solid;border-width:1px;border-color:#404040 #d4d0c8 #d4d0c8 #404040;background:#d4d0c8"></div></div>
<div style="left:229px;top:849px;width:16px;height:17px;box-sizing:border-box;border-style:solid;border-width:1px;border-color:#d4d0c8 #404040 #404040 #d4d0c8;"><div style="position:absolute;left:0;top:0;right:0;bottom:0;border-style:solid;border-width:1px;border-color:#ffffff #808080 #808080 #ffffff;background:#d4d0c8"></div></div>
<svg style="position:absolute;left:233px;top:855px" width="7" height="4"><path d="M0 0h7v1h-1v1h-1v1h-1v1h-1v-1h-1v-1h-1v-1h-1z" fill="#000" shape-rendering="crispEdges"/></svg>
<div style="left:186px;top:852px;font:11px 'Liberation Sans',sans-serif;line-height:13px;color:#000080;white-space:pre;letter-spacing:-0.1px;">4</div>
<div style="left:268px;top:633px;width:162px;overflow:hidden;font:11px 'Liberation Sans',sans-serif;line-height:13px;color:#000;white-space:pre"><span style="letter-spacing:-0.1px">Write to Read (same rank)</span><span style="letter-spacing:-0.06px">................................................................................</span></div>
<div style="left:430px;top:627px;width:65px;height:21px;box-sizing:border-box;border-style:solid;border-width:1px;border-color:#808080 #ffffff #ffffff #808080;"><div style="position:absolute;left:0;top:0;right:0;bottom:0;border-style:solid;border-width:1px;border-color:#404040 #d4d0c8 #d4d0c8 #404040;background:#d4d0c8"></div></div>
<div style="left:477px;top:629px;width:16px;height:17px;box-sizing:border-box;border-style:solid;border-width:1px;border-color:#d4d0c8 #404040 #404040 #d4d0c8;"><div style="position:absolute;left:0;top:0;right:0;bottom:0;border-style:solid;border-width:1px;border-color:#ffffff #808080 #808080 #ffffff;background:#d4d0c8"></div></div>
<svg style="position:absolute;left:481px;top:635px" width="7" height="4"><path d="M0 0h7v1h-1v1h-1v1h-1v1h-1v-1h-1v-1h-1v-1h-1z" fill="#000" shape-rendering="crispEdges"/></svg>
<div style="left:434px;top:632px;font:11px 'Liberation Sans',sans-serif;line-height:13px;color:#000080;white-space:pre;letter-spacing:-0.1px;">15</div>
<div style="left:268px;top:655px;width:162px;overflow:hidden;font:11px 'Liberation Sans',sans-serif;line-height:13px;color:#000;white-space:pre"><span style="letter-spacing:-0.1px">Read to Write (different dimms)</span><span style="letter-spacing:-0.06px">................................................................................</span></div>
<div style="left:430px;top:649px;width:65px;height:21px;box-sizing:border-box;border-style:solid;border-width:1px;border-color:#808080 #ffffff #ffffff #808080;"><div style="position:absolute;left:0;top:0;right:0;bottom:0;border-style:solid;border-width:1px;border-color:#404040 #d4d0c8 #d4d0c8 #404040;background:#d4d0c8"></div></div>
<div style="left:477px;top:651px;width:16px;height:17px;box-sizing:border-box;border-style:solid;border-width:1px;border-color:#d4d0c8 #404040 #404040 #d4d0c8;"><div style="position:absolute;left:0;top:0;right:0;bottom:0;border-style:solid;border-width:1px;border-color:#ffffff #808080 #808080 #ffffff;background:#d4d0c8"></div></div>
<svg style="position:absolute;left:481px;top:657px" width="7" height="4"><path d="M0 0h7v1h-1v1h-1v1h-1v1h-1v-1h-1v-1h-1v-1h-1z" fill="#000" shape-rendering="crispEdges"/></svg>
<div style="left:434px;top:654px;font:11px 'Liberation Sans',sans-serif;line-height:13px;color:#000080;white-space:pre;letter-spacing:-0.1px;">9</div>
<div style="left:268px;top:677px;width:162px;overflow:hidden;font:11px 'Liberation Sans',sans-serif;line-height:13px;color:#000;white-space:pre"><span style="letter-spacing:-0.1px">Read to Write (different ranks)</span><span style="letter-spacing:-0.06px">................................................................................</span></div>
<div style="left:430px;top:671px;width:65px;height:21px;box-sizing:border-box;border-style:solid;border-width:1px;border-color:#808080 #ffffff #ffffff #808080;"><div style="position:absolute;left:0;top:0;right:0;bottom:0;border-style:solid;border-width:1px;border-color:#404040 #d4d0c8 #d4d0c8 #404040;background:#d4d0c8"></div></div>
<div style="left:477px;top:673px;width:16px;height:17px;box-sizing:border-box;border-style:solid;border-width:1px;border-color:#d4d0c8 #404040 #404040 #d4d0c8;"><div style="position:absolute;left:0;top:0;right:0;bottom:0;border-style:solid;border-width:1px;border-color:#ffffff #808080 #808080 #ffffff;background:#d4d0c8"></div></div>
<svg style="position:absolute;left:481px;top:679px" width="7" height="4"><path d="M0 0h7v1h-1v1h-1v1h-1v1h-1v-1h-1v-1h-1v-1h-1z" fill="#000" shape-rendering="crispEdges"/></svg>
<div style="left:434px;top:676px;font:11px 'Liberation Sans',sans-serif;line-height:13px;color:#000080;white-space:pre;letter-spacing:-0.1px;">9</div>
<div style="left:268px;top:699px;width:162px;overflow:hidden;font:11px 'Liberation Sans',sans-serif;line-height:13px;color:#000;white-space:pre"><span style="letter-spacing:-0.1px">Read to Write (same rank)</span><span style="letter-spacing:-0.06px">................................................................................</span></div>
<div style="left:430px;top:693px;width:65px;height:21px;box-sizing:border-box;border-style:solid;border-width:1px;border-color:#808080 #ffffff #ffffff #808080;"><div style="position:absolute;left:0;top:0;right:0;bottom:0;border-style:solid;border-width:1px;border-color:#404040 #d4d0c8 #d4d0c8 #404040;background:#d4d0c8"></div></div>
<div style="left:477px;top:695px;width:16px;height:17px;box-sizing:border-box;border-style:solid;border-width:1px;border-color:#d4d0c8 #404040 #404040 #d4d0c8;"><div style="position:absolute;left:0;top:0;right:0;bottom:0;border-style:solid;border-width:1px;border-color:#ffffff #808080 #808080 #ffffff;background:#d4d0c8"></div></div>
<svg style="position:absolute;left:481px;top:701px" width="7" height="4"><path d="M0 0h7v1h-1v1h-1v1h-1v1h-1v-1h-1v-1h-1v-1h-1z" fill="#000" shape-rendering="crispEdges"/></svg>
<div style="left:434px;top:698px;font:11px 'Liberation Sans',sans-serif;line-height:13px;color:#000080;white-space:pre;letter-spacing:-0.1px;">9</div>
<div style="left:268px;top:721px;width:162px;overflow:hidden;font:11px 'Liberation Sans',sans-serif;line-height:13px;color:#000;white-space:pre"><span style="letter-spacing:-0.1px">Read to Read (different dimms)</span><span style="letter-spacing:-0.06px">................................................................................</span></div>
<div style="left:430px;top:715px;width:65px;height:21px;box-sizing:border-box;border-style:solid;border-width:1px;border-color:#808080 #ffffff #ffffff #808080;"><div style="position:absolute;left:0;top:0;right:0;bottom:0;border-style:solid;border-width:1px;border-color:#404040 #d4d0c8 #d4d0c8 #404040;background:#d4d0c8"></div></div>
<div style="left:477px;top:717px;width:16px;height:17px;box-sizing:border-box;border-style:solid;border-width:1px;border-color:#d4d0c8 #404040 #404040 #d4d0c8;"><div style="position:absolute;left:0;top:0;right:0;bottom:0;border-style:solid;border-width:1px;border-color:#ffffff #808080 #808080 #ffffff;background:#d4d0c8"></div></div>
<svg style="position:absolute;left:481px;top:723px" width="7" height="4"><path d="M0 0h7v1h-1v1h-1v1h-1v1h-1v-1h-1v-1h-1v-1h-1z" fill="#000" shape-rendering="crispEdges"/></svg>
<div style="left:434px;top:720px;font:11px 'Liberation Sans',sans-serif;line-height:13px;color:#000080;white-space:pre;letter-spacing:-0.1px;">7</div>
<div style="left:268px;top:743px;width:162px;overflow:hidden;font:11px 'Liberation Sans',sans-serif;line-height:13px;color:#000;white-space:pre"><span style="letter-spacing:-0.1px">Read to Read (different ranks)</span><span style="letter-spacing:-0.06px">................................................................................</span></div>
<div style="left:430px;top:737px;width:65px;height:21px;box-sizing:border-box;border-style:solid;border-width:1px;border-color:#808080 #ffffff #ffffff #808080;"><div style="position:absolute;left:0;top:0;right:0;bottom:0;border-style:solid;border-width:1px;border-color:#404040 #d4d0c8 #d4d0c8 #404040;background:#d4d0c8"></div></div>
<div style="left:477px;top:739px;width:16px;height:17px;box-sizing:border-box;border-style:solid;border-width:1px;border-color:#d4d0c8 #404040 #404040 #d4d0c8;"><div style="position:absolute;left:0;top:0;right:0;bottom:0;border-style:solid;border-width:1px;border-color:#ffffff #808080 #808080 #ffffff;background:#d4d0c8"></div></div>
<svg style="position:absolute;left:481px;top:745px" width="7" height="4"><path d="M0 0h7v1h-1v1h-1v1h-1v1h-1v-1h-1v-1h-1v-1h-1z" fill="#000" shape-rendering="crispEdges"/></svg>
<div style="left:434px;top:742px;font:11px 'Liberation Sans',sans-serif;line-height:13px;color:#000080;white-space:pre;letter-spacing:-0.1px;">6</div>
<div style="left:268px;top:765px;width:162px;overflow:hidden;font:11px 'Liberation Sans',sans-serif;line-height:13px;color:#000;white-space:pre"><span style="letter-spacing:-0.1px">Read to Read (same rank)</span><span style="letter-spacing:-0.06px">................................................................................</span></div>
<div style="left:430px;top:759px;width:65px;height:21px;box-sizing:border-box;border-style:solid;border-width:1px;border-color:#808080 #ffffff #ffffff #808080;"><div style="position:absolute;left:0;top:0;right:0;bottom:0;border-style:solid;border-width:1px;border-color:#404040 #d4d0c8 #d4d0c8 #404040;background:#d4d0c8"></div></div>
<div style="left:477px;top:761px;width:16px;height:17px;box-sizing:border-box;border-style:solid;border-width:1px;border-color:#d4d0c8 #404040 #404040 #d4d0c8;"><div style="position:absolute;left:0;top:0;right:0;bottom:0;border-style:solid;border-width:1px;border-color:#ffffff #808080 #808080 #ffffff;background:#d4d0c8"></div></div>
<svg style="position:absolute;left:481px;top:767px" width="7" height="4"><path d="M0 0h7v1h-1v1h-1v1h-1v1h-1v-1h-1v-1h-1v-1h-1z" fill="#000" shape-rendering="crispEdges"/></svg>
<div style="left:434px;top:764px;font:11px 'Liberation Sans',sans-serif;line-height:13px;color:#000080;white-space:pre;letter-spacing:-0.1px;">4</div>
<div style="left:268px;top:787px;width:162px;overflow:hidden;font:11px 'Liberation Sans',sans-serif;line-height:13px;color:#000;white-space:pre"><span style="letter-spacing:-0.1px">Write to Write (different dimms)</span><span style="letter-spacing:-0.06px">................................................................................</span></div>
<div style="left:430px;top:781px;width:65px;height:21px;box-sizing:border-box;border-style:solid;border-width:1px;border-color:#808080 #ffffff #ffffff #808080;"><div style="position:absolute;left:0;top:0;right:0;bottom:0;border-style:solid;border-width:1px;border-color:#404040 #d4d0c8 #d4d0c8 #404040;background:#d4d0c8"></div></div>
<div style="left:477px;top:783px;width:16px;height:17px;box-sizing:border-box;border-style:solid;border-width:1px;border-color:#d4d0c8 #404040 #404040 #d4d0c8;"><div style="position:absolute;left:0;top:0;right:0;bottom:0;border-style:solid;border-width:1px;border-color:#ffffff #808080 #808080 #ffffff;background:#d4d0c8"></div></div>
<svg style="position:absolute;left:481px;top:789px" width="7" height="4"><path d="M0 0h7v1h-1v1h-1v1h-1v1h-1v-1h-1v-1h-1v-1h-1z" fill="#000" shape-rendering="crispEdges"/></svg>
<div style="left:434px;top:786px;font:11px 'Liberation Sans',sans-serif;line-height:13px;color:#000080;white-space:pre;letter-spacing:-0.1px;">7</div>
<div style="left:268px;top:809px;width:162px;overflow:hidden;font:11px 'Liberation Sans',sans-serif;line-height:13px;color:#000;white-space:pre"><span style="letter-spacing:-0.1px">Write to Write (different ranks)</span><span style="letter-spacing:-0.06px">................................................................................</span></div>
<div style="left:430px;top:803px;width:65px;height:21px;box-sizing:border-box;border-style:solid;border-width:1px;border-color:#808080 #ffffff #ffffff #808080;"><div style="position:absolute;left:0;top:0;right:0;bottom:0;border-style:solid;border-width:1px;border-color:#404040 #d4d0c8 #d4d0c8 #404040;background:#d4d0c8"></div></div>
<div style="left:477px;top:805px;width:16px;height:17px;box-sizing:border-box;border-style:solid;border-width:1px;border-color:#d4d0c8 #404040 #404040 #d4d0c8;"><div style="position:absolute;left:0;top:0;right:0;bottom:0;border-style:solid;border-width:1px;border-color:#ffffff #808080 #808080 #ffffff;background:#d4d0c8"></div></div>
<svg style="position:absolute;left:481px;top:811px" width="7" height="4"><path d="M0 0h7v1h-1v1h-1v1h-1v1h-1v-1h-1v-1h-1v-1h-1z" fill="#000" shape-rendering="crispEdges"/></svg>
<div style="left:434px;top:808px;font:11px 'Liberation Sans',sans-serif;line-height:13px;color:#000080;white-space:pre;letter-spacing:-0.1px;">7</div>
<div style="left:268px;top:831px;width:162px;overflow:hidden;font:11px 'Liberation Sans',sans-serif;line-height:13px;color:#000;white-space:pre"><span style="letter-spacing:-0.1px">Write to Write (same rank)</span><span style="letter-spacing:-0.06px">................................................................................</span></div>
<div style="left:430px;top:825px;width:65px;height:21px;box-sizing:border-box;border-style:solid;border-width:1px;border-color:#808080 #ffffff #ffffff #808080;"><div style="position:absolute;left:0;top:0;right:0;bottom:0;border-style:solid;border-width:1px;border-color:#404040 #d4d0c8 #d4d0c8 #404040;background:#d4d0c8"></div></div>
<div style="left:477px;top:827px;width:16px;height:17px;box-sizing:border-box;border-style:solid;border-width:1px;border-color:#d4d0c8 #404040 #404040 #d4d0c8;"><div style="position:absolute;left:0;top:0;right:0;bottom:0;border-style:solid;border-width:1px;border-color:#ffffff #808080 #808080 #ffffff;background:#d4d0c8"></div></div>
<svg style="position:absolute;left:481px;top:833px" width="7" height="4"><path d="M0 0h7v1h-1v1h-1v1h-1v1h-1v-1h-1v-1h-1v-1h-1z" fill="#000" shape-rendering="crispEdges"/></svg>
<div style="left:434px;top:830px;font:11px 'Liberation Sans',sans-serif;line-height:13px;color:#000080;white-space:pre;letter-spacing:-0.1px;">4</div>
<div style="left:268px;top:853px;width:162px;overflow:hidden;font:11px 'Liberation Sans',sans-serif;line-height:13px;color:#000;white-space:pre"><span style="letter-spacing:-0.1px">Idle Cycle limit (tRANKIDLE) </span><span style="letter-spacing:-0.06px">................................................................................</span></div>
<div style="left:430px;top:847px;width:65px;height:21px;box-sizing:border-box;border-style:solid;border-width:1px;border-color:#808080 #ffffff #ffffff #808080;"><div style="position:absolute;left:0;top:0;right:0;bottom:0;border-style:solid;border-width:1px;border-color:#404040 #d4d0c8 #d4d0c8 #404040;background:#d4d0c8"></div></div>
<div style="left:477px;top:849px;width:16px;height:17px;box-sizing:border-box;border-style:solid;border-width:1px;border-color:#d4d0c8 #404040 #404040 #d4d0c8;"><div style="position:absolute;left:0;top:0;right:0;bottom:0;border-style:solid;border-width:1px;border-color:#ffffff #808080 #808080 #ffffff;background:#d4d0c8"></div></div>
<svg style="position:absolute;left:481px;top:855px" width="7" height="4"><path d="M0 0h7v1h-1v1h-1v1h-1v1h-1v-1h-1v-1h-1v-1h-1z" fill="#000" shape-rendering="crispEdges"/></svg>
<div style="left:434px;top:852px;font:11px 'Liberation Sans',sans-serif;line-height:13px;color:#000080;white-space:pre;letter-spacing:-0.1px;">50</div>
<div style="left:16px;top:880px;width:63px;height:25px;box-sizing:border-box;border-style:solid;border-width:1px;border-color:#ffffff #404040 #404040 #ffffff;"><div style="position:absolute;left:0;top:0;right:0;bottom:0;border-style:solid;border-width:1px;border-color:#d4d0c8 #808080 #808080 #d4d0c8;background:#d4d0c8"></div></div>
<div style="left:16px;top:886px;font:11px 'Liberation Sans',sans-serif;line-height:13px;color:#000;white-space:pre;letter-spacing:-0.1px;width:63px;text-align:center;">Apply</div>
<div style="left:84px;top:880px;width:63px;height:25px;box-sizing:border-box;border-style:solid;border-width:1px;border-color:#ffffff #404040 #404040 #ffffff;"><div style="position:absolute;left:0;top:0;right:0;bottom:0;border-style:solid;border-width:1px;border-color:#d4d0c8 #808080 #808080 #d4d0c8;background:#d4d0c8"></div></div>
<div style="left:84px;top:886px;font:11px 'Liberation Sans',sans-serif;line-height:13px;color:#000;white-space:pre;letter-spacing:-0.1px;width:63px;text-align:center;">Save</div>
<div style="left:152px;top:880px;width:63px;height:25px;box-sizing:border-box;border-style:solid;border-width:1px;border-color:#ffffff #000 #000 #ffffff;"><div style="position:absolute;left:0;top:0;right:0;bottom:0;border-style:solid;border-width:1px;border-color:#d4d0c8 #808080 #808080 #d4d0c8;background:#d4d0c8"></div></div>
<div style="left:152px;top:886px;font:11px 'Liberation Sans',sans-serif;line-height:13px;color:#000;white-space:pre;letter-spacing:-0.1px;width:63px;text-align:center;">CPU</div>
<div style="left:220px;top:880px;width:63px;height:25px;box-sizing:border-box;border-style:solid;border-width:1px;border-color:#ffffff #404040 #404040 #ffffff;"><div style="position:absolute;left:0;top:0;right:0;bottom:0;border-style:solid;border-width:1px;border-color:#d4d0c8 #808080 #808080 #d4d0c8;background:#d4d0c8"></div></div>
<div style="left:220px;top:886px;font:11px 'Liberation Sans',sans-serif;line-height:13px;color:#000;white-space:pre;letter-spacing:-0.1px;width:63px;text-align:center;">Hide</div>
<div style="left:288px;top:880px;width:63px;height:25px;box-sizing:border-box;border-style:solid;border-width:1px;border-color:#ffffff #404040 #404040 #ffffff;"><div style="position:absolute;left:0;top:0;right:0;bottom:0;border-style:solid;border-width:1px;border-color:#d4d0c8 #808080 #808080 #d4d0c8;background:#d4d0c8"></div></div>
<div style="left:288px;top:886px;font:11px 'Liberation Sans',sans-serif;line-height:13px;color:#000;white-space:pre;letter-spacing:-0.1px;width:63px;text-align:center;">spd</div>
<div style="left:356px;top:880px;width:63px;height:25px;box-sizing:border-box;border-style:solid;border-width:1px;border-color:#ffffff #404040 #404040 #ffffff;"><div style="position:absolute;left:0;top:0;right:0;bottom:0;border-style:solid;border-width:1px;border-color:#d4d0c8 #808080 #808080 #d4d0c8;background:#d4d0c8"></div></div>
<div style="left:356px;top:886px;font:11px 'Liberation Sans',sans-serif;line-height:13px;color:#000;white-space:pre;letter-spacing:-0.1px;width:63px;text-align:center;">About</div>
<div style="left:424px;top:880px;width:76px;height:25px;box-sizing:border-box;border-style:solid;border-width:1px;border-color:#ffffff #404040 #404040 #ffffff;"><div style="position:absolute;left:0;top:0;right:0;bottom:0;border-style:solid;border-width:1px;border-color:#d4d0c8 #808080 #808080 #d4d0c8;background:#d4d0c8"></div></div>
<div style="left:424px;top:886px;font:bold 13px 'Liberation Sans',sans-serif;line-height:13px;color:#000;white-space:pre;letter-spacing:-0.1px;width:76px;text-align:center;">Exit</div>
<div style="left:513px;top:346px;width:407px;height:566px;box-sizing:border-box;border-style:solid;border-width:1px;border-color:#d4d0c8 #404040 #404040 #d4d0c8;"><div style="position:absolute;left:0;top:0;right:0;bottom:0;border-style:solid;border-width:1px;border-color:#ffffff #808080 #808080 #ffffff;background:#d4d0c8"></div></div>
<div style="left:516px;top:349px;width:401px;height:18px;background:linear-gradient(to right,#808080,#c0c0c0);"></div>
<svg style="position:absolute;left:517px;top:351px" width="18" height="15"><defs><linearGradient id="czg" x1="0" y1="0" x2="1" y2="1"><stop offset="0" stop-color="#ffffff"/><stop offset="1" stop-color="#b8b8b8"/></linearGradient></defs><polygon points="1,5.5 8,1 17,5.5 9,12.5" fill="url(#czg)" stroke="#78b878" stroke-width="0.8"/><polyline points="1.5,6 9,12.5 16.5,6" fill="none" stroke="#2a7a2a" stroke-width="1.1"/></svg>
<div style="left:536px;top:352px;font:bold 12px 'Liberation Sans',sans-serif;line-height:13px;color:#d4d0c8;white-space:pre">CPU-Z</div>
<div style="left:899px;top:351px;width:16px;height:14px;box-sizing:border-box;border-style:solid;border-width:1px;border-color:#d4d0c8 #404040 #404040 #d4d0c8;"><div style="position:absolute;left:0;top:0;right:0;bottom:0;border-style:solid;border-width:1px;border-color:#ffffff #808080 #808080 #ffffff;background:#d4d0c8"></div></div>
<svg style="position:absolute;left:903px;top:354px" width="8" height="7"><path d="M0 0h2l2 2 2-2h2v1l-3 2.5 3 2.5v1h-2l-2-2-2 2h-2v-1l3-2.5-3-2.5z" fill="#000"/></svg>
<div style="left:881px;top:351px;width:16px;height:14px;box-sizing:border-box;border-style:solid;border-width:1px;border-color:#d4d0c8 #404040 #404040 #d4d0c8;"><div style="position:absolute;left:0;top:0;right:0;bottom:0;border-style:solid;border-width:1px;border-color:#ffffff #808080 #808080 #ffffff;background:#d4d0c8"></div></div>
<div style="left:884px;top:353px;width:9px;height:9px;box-sizing:border-box;border:1px solid #808080;border-top-width:2px"></div>
<div style="left:885px;top:354px;width:9px;height:9px;box-sizing:border-box;border-right:1px solid #fff;border-bottom:1px solid #fff"></div>
<div style="left:865px;top:351px;width:16px;height:14px;box-sizing:border-box;border-style:solid;border-width:1px;border-color:#d4d0c8 #404040 #404040 #d4d0c8;"><div style="position:absolute;left:0;top:0;right:0;bottom:0;border-style:solid;border-width:1px;border-color:#ffffff #808080 #808080 #ffffff;background:#d4d0c8"></div></div>
<div style="left:869px;top:360px;width:6px;height:2px;background:#000;"></div>
<div style="left:521px;top:374px;width:1px;height:17px;background:#fff"></div>
<div style="left:522px;top:373px;width:39px;height:1px;background:#fff"></div>
<div style="left:561px;top:374px;width:1px;height:17px;background:#808080"></div>
<div style="left:562px;top:374px;width:1px;height:17px;background:#404040"></div>
<div style="left:527px;top:377px;font:11px 'Liberation Sans',sans-serif;line-height:13px;color:#000;white-space:pre;letter-spacing:0px;">CPU</div>
<div style="left:563px;top:374px;width:1px;height:17px;background:#fff"></div>
<div style="left:564px;top:373px;width:44px;height:1px;background:#fff"></div>
<div style="left:608px;top:374px;width:1px;height:17px;background:#808080"></div>
<div style="left:609px;top:374px;width:1px;height:17px;background:#404040"></div>
<div style="left:569px;top:377px;font:11px 'Liberation Sans',sans-serif;line-height:13px;color:#000;white-space:pre;letter-spacing:0px;">Caches</div>
<div style="left:610px;top:374px;width:1px;height:17px;background:#fff"></div>
<div style="left:611px;top:373px;width:59px;height:1px;background:#fff"></div>
<div style="left:670px;top:374px;width:1px;height:17px;background:#808080"></div>
<div style="left:671px;top:374px;width:1px;height:17px;background:#404040"></div>
<div style="left:616px;top:377px;font:11px 'Liberation Sans',sans-serif;line-height:13px;color:#000;white-space:pre;letter-spacing:0px;">Mainboard</div>
<div style="left:672px;top:374px;width:1px;height:17px;background:#fff"></div>
<div style="left:673px;top:373px;width:47px;height:1px;background:#fff"></div>
<div style="left:720px;top:374px;width:1px;height:17px;background:#808080"></div>
<div style="left:721px;top:374px;width:1px;height:17px;background:#404040"></div>
<div style="left:678px;top:377px;font:11px 'Liberation Sans',sans-serif;line-height:13px;color:#000;white-space:pre;letter-spacing:0px;">Memory</div>
<div style="left:764px;top:374px;width:1px;height:17px;background:#fff"></div>
<div style="left:765px;top:373px;width:50px;height:1px;background:#fff"></div>
<div style="left:815px;top:374px;width:1px;height:17px;background:#808080"></div>
<div style="left:816px;top:374px;width:1px;height:17px;background:#404040"></div>
<div style="left:770px;top:377px;font:11px 'Liberation Sans',sans-serif;line-height:13px;color:#000;white-space:pre;letter-spacing:0px;">Graphics</div>
<div style="left:817px;top:374px;width:1px;height:17px;background:#fff"></div>
<div style="left:818px;top:373px;width:39px;height:1px;background:#fff"></div>
<div style="left:857px;top:374px;width:1px;height:17px;background:#808080"></div>
<div style="left:858px;top:374px;width:1px;height:17px;background:#404040"></div>
<div style="left:823px;top:377px;font:11px 'Liberation Sans',sans-serif;line-height:13px;color:#000;white-space:pre;letter-spacing:0px;">About</div>
<div style="left:519px;top:391px;width:395px;height:490px;box-sizing:border-box;background:#d4d0c8;border-left:1px solid #fff;border-top:1px solid #fff;border-right:1px solid #404040;border-bottom:1px solid #404040"><div style="position:absolute;right:0;bottom:0;left:0;top:0;border-right:1px solid #808080;border-bottom:1px solid #808080"></div></div>
<div style="left:721px;top:372px;width:44px;height:21px;background:#d4d0c8;"></div>
<div style="left:720px;top:372px;width:1px;height:20px;background:#fff"></div>
<div style="left:721px;top:371px;width:43px;height:1px;background:#fff"></div>
<div style="left:764px;top:372px;width:1px;height:20px;background:#808080"></div>
<div style="left:765px;top:372px;width:1px;height:20px;background:#404040"></div>
<div style="left:728px;top:375px;font:11px 'Liberation Sans',sans-serif;line-height:13px;color:#000;white-space:pre;letter-spacing:0px;">SPD</div>
<div style="left:525px;top:402px;width:385px;height:199px;box-sizing:border-box;border:1px solid #ffffff"></div>
<div style="left:524px;top:401px;width:385px;height:199px;box-sizing:border-box;border:1px solid #808080"></div>
<div style="left:531px;top:396px;height:13px;padding:0 1px;background:#d4d0c8;font:11px 'Liberation Sans',sans-serif;line-height:13px;color:#000;white-space:pre;letter-spacing:0px">Memory Slot Selection</div>
<div style="left:532px;top:412px;width:86px;height:22px;box-sizing:border-box;border-style:solid;border-width:1px;border-color:#808080 #ffffff #ffffff #808080;"><div style="position:absolute;left:0;top:0;right:0;bottom:0;border-style:solid;border-width:1px;border-color:#404040 #d4d0c8 #d4d0c8 #404040;background:#ffffff"></div></div>
<div style="left:600px;top:414px;width:16px;height:18px;box-sizing:border-box;border-style:solid;border-width:1px;border-color:#d4d0c8 #404040 #404040 #d4d0c8;"><div style="position:absolute;left:0;top:0;right:0;bottom:0;border-style:solid;border-width:1px;border-color:#ffffff #808080 #808080 #ffffff;background:#d4d0c8"></div></div>
<svg style="position:absolute;left:604px;top:421px" width="7" height="4"><path d="M0 0h7v1h-1v1h-1v1h-1v1h-1v-1h-1v-1h-1v-1h-1z" fill="#000" shape-rendering="crispEdges"/></svg>
<div style="left:536px;top:417px;font:11px 'Liberation Sans',sans-serif;line-height:13px;color:#000080;white-space:pre;letter-spacing:0px;">Slot #1</div>
<div style="left:626px;top:415px;width:254px;height:16px;box-sizing:border-box;border-style:solid;border-width:1px;border-color:#808080 #ffffff #ffffff #808080;"></div>
<div style="left:630px;top:417px;font:11px 'Liberation Sans',sans-serif;line-height:13px;color:#000080;white-space:pre;letter-spacing:0px;">DDR3</div>
<div style="left:317px;top:437px;width:300px;text-align:right;font:11px 'Liberation Sans',sans-serif;line-height:13px;color:#000;white-space:pre;">Module Size</div>
<div style="left:626px;top:434px;width:125px;height:16px;box-sizing:border-box;border-style:solid;border-width:1px;border-color:#808080 #ffffff #ffffff #808080;"></div>
<div style="left:626px;top:436px;font:11px 'Liberation Sans',sans-serif;line-height:13px;color:#000080;white-space:pre;letter-spacing:0px;width:125px;text-align:center;">2048 MBytes</div>
<div style="left:518px;top:437px;width:300px;text-align:right;font:11px 'Liberation Sans',sans-serif;line-height:13px;color:#808080;white-space:pre;text-shadow:1px 1px 0 #fff">Correction</div>
<div style="left:827px;top:434px;width:53px;height:16px;box-sizing:border-box;border-style:solid;border-width:1px;border-color:#808080 #ffffff #ffffff #808080;"></div>
<div style="left:317px;top:455px;width:300px;text-align:right;font:11px 'Liberation Sans',sans-serif;line-height:13px;color:#000;white-space:pre;">Max Bandwidth</div>
<div style="left:626px;top:452px;width:125px;height:16px;box-sizing:border-box;border-style:solid;border-width:1px;border-color:#808080 #ffffff #ffffff #808080;"></div>
<div style="left:626px;top:454px;font:11px 'Liberation Sans',sans-serif;line-height:13px;color:#000080;white-space:pre;letter-spacing:0px;width:125px;text-align:center;">PC3-8500F (533 MHz)</div>
<div style="left:518px;top:455px;width:300px;text-align:right;font:11px 'Liberation Sans',sans-serif;line-height:13px;color:#808080;white-space:pre;text-shadow:1px 1px 0 #fff">Registered</div>
<div style="left:827px;top:452px;width:53px;height:16px;box-sizing:border-box;border-style:solid;border-width:1px;border-color:#808080 #ffffff #ffffff #808080;"></div>
<div style="left:317px;top:473px;width:300px;text-align:right;font:11px 'Liberation Sans',sans-serif;line-height:13px;color:#000;white-space:pre;">Manufacturer</div>
<div style="left:626px;top:470px;width:125px;height:16px;box-sizing:border-box;border-style:solid;border-width:1px;border-color:#808080 #ffffff #ffffff #808080;"></div>
<div style="left:626px;top:472px;font:11px 'Liberation Sans',sans-serif;line-height:13px;color:#000080;white-space:pre;letter-spacing:0px;width:125px;text-align:center;">OCZ</div>
<div style="left:518px;top:473px;width:300px;text-align:right;font:11px 'Liberation Sans',sans-serif;line-height:13px;color:#808080;white-space:pre;text-shadow:1px 1px 0 #fff">Buffered</div>
<div style="left:827px;top:470px;width:53px;height:16px;box-sizing:border-box;border-style:solid;border-width:1px;border-color:#808080 #ffffff #ffffff #808080;"></div>
<div style="left:317px;top:491px;width:300px;text-align:right;font:11px 'Liberation Sans',sans-serif;line-height:13px;color:#000;white-space:pre;">Part Number</div>
<div style="left:626px;top:488px;width:125px;height:16px;box-sizing:border-box;border-style:solid;border-width:1px;border-color:#808080 #ffffff #ffffff #808080;"></div>
<div style="left:636px;top:490px;font:11px 'Liberation Sans',sans-serif;line-height:13px;color:#000080;white-space:pre;letter-spacing:0px;">OCZ3B2000LV2G</div>
<div style="left:518px;top:491px;width:300px;text-align:right;font:11px 'Liberation Sans',sans-serif;line-height:13px;color:#808080;white-space:pre;text-shadow:1px 1px 0 #fff">SPD Ext.</div>
<div style="left:827px;top:488px;width:53px;height:16px;box-sizing:border-box;border-style:solid;border-width:1px;border-color:#808080 #ffffff #ffffff #808080;"></div>
<div style="left:317px;top:508px;width:300px;text-align:right;font:11px 'Liberation Sans',sans-serif;line-height:13px;color:#808080;white-space:pre;text-shadow:1px 1px 0 #fff">Serial Number</div>
<div style="left:626px;top:506px;width:125px;height:16px;box-sizing:border-box;border-style:solid;border-width:1px;border-color:#808080 #ffffff #ffffff #808080;"></div>
<div style="left:518px;top:508px;width:300px;text-align:right;font:11px 'Liberation Sans',sans-serif;line-height:13px;color:#808080;white-space:pre;text-shadow:1px 1px 0 #fff">Week/Year</div>
<div style="left:827px;top:506px;width:53px;height:16px;box-sizing:border-box;border-style:solid;border-width:1px;border-color:#808080 #ffffff #ffffff #808080;"></div>
<div style="left:513px;top:523px;width:407px;height:389px;box-sizing:border-box;border-style:solid;border-width:1px;border-color:#d4d0c8 #404040 #404040 #d4d0c8;"><div style="position:absolute;left:0;top:0;right:0;bottom:0;border-style:solid;border-width:1px;border-color:#ffffff #808080 #808080 #ffffff;background:#d4d0c8"></div></div>
<div style="left:516px;top:526px;width:401px;height:18px;background:linear-gradient(to right,#808080,#c0c0c0);"></div>
<svg style="position:absolute;left:517px;top:528px" width="18" height="15"><defs><linearGradient id="czg" x1="0" y1="0" x2="1" y2="1"><stop offset="0" stop-color="#ffffff"/><stop offset="1" stop-color="#b8b8b8"/></linearGradient></defs><polygon points="1,5.5 8,1 17,5.5 9,12.5" fill="url(#czg)" stroke="#78b878" stroke-width="0.8"/><polyline points="1.5,6 9,12.5 16.5,6" fill="none" stroke="#2a7a2a" stroke-width="1.1"/></svg>
<div style="left:536px;top:529px;font:bold 12px 'Liberation Sans',sans-serif;line-height:13px;color:#d4d0c8;white-space:pre">CPU-Z</div>
<div style="left:899px;top:528px;width:16px;height:14px;box-sizing:border-box;border-style:solid;border-width:1px;border-color:#d4d0c8 #404040 #404040 #d4d0c8;"><div style="position:absolute;left:0;top:0;right:0;bottom:0;border-style:solid;border-width:1px;border-color:#ffffff #808080 #808080 #ffffff;background:#d4d0c8"></div></div>
<svg style="position:absolute;left:903px;top:531px" width="8" height="7"><path d="M0 0h2l2 2 2-2h2v1l-3 2.5 3 2.5v1h-2l-2-2-2 2h-2v-1l3-2.5-3-2.5z" fill="#000"/></svg>
<div style="left:881px;top:528px;width:16px;height:14px;box-sizing:border-box;border-style:solid;border-width:1px;border-color:#d4d0c8 #404040 #404040 #d4d0c8;"><div style="position:absolute;left:0;top:0;right:0;bottom:0;border-style:solid;border-width:1px;border-color:#ffffff #808080 #808080 #ffffff;background:#d4d0c8"></div></div>
<div style="left:884px;top:530px;width:9px;height:9px;box-sizing:border-box;border:1px solid #808080;border-top-width:2px"></div>
<div style="left:885px;top:531px;width:9px;height:9px;box-sizing:border-box;border-right:1px solid #fff;border-bottom:1px solid #fff"></div>
<div style="left:865px;top:528px;width:16px;height:14px;box-sizing:border-box;border-style:solid;border-width:1px;border-color:#d4d0c8 #404040 #404040 #d4d0c8;"><div style="position:absolute;left:0;top:0;right:0;bottom:0;border-style:solid;border-width:1px;border-color:#ffffff #808080 #808080 #ffffff;background:#d4d0c8"></div></div>
<div style="left:869px;top:537px;width:6px;height:2px;background:#000;"></div>
<div style="left:521px;top:551px;width:1px;height:17px;background:#fff"></div>
<div style="left:522px;top:550px;width:39px;height:1px;background:#fff"></div>
<div style="left:561px;top:551px;width:1px;height:17px;background:#808080"></div>
<div style="left:562px;top:551px;width:1px;height:17px;background:#404040"></div>
<div style="left:527px;top:554px;font:11px 'Liberation Sans',sans-serif;line-height:13px;color:#000;white-space:pre;letter-spacing:0px;">CPU</div>
<div style="left:563px;top:551px;width:1px;height:17px;background:#fff"></div>
<div style="left:564px;top:550px;width:44px;height:1px;background:#fff"></div>
<div style="left:608px;top:551px;width:1px;height:17px;background:#808080"></div>
<div style="left:609px;top:551px;width:1px;height:17px;background:#404040"></div>
<div style="left:569px;top:554px;font:11px 'Liberation Sans',sans-serif;line-height:13px;color:#000;white-space:pre;letter-spacing:0px;">Caches</div>
<div style="left:672px;top:551px;width:1px;height:17px;background:#fff"></div>
<div style="left:673px;top:550px;width:47px;height:1px;background:#fff"></div>
<div style="left:720px;top:551px;width:1px;height:17px;background:#808080"></div>
<div style="left:721px;top:551px;width:1px;height:17px;background:#404040"></div>
<div style="left:678px;top:554px;font:11px 'Liberation Sans',sans-serif;line-height:13px;color:#000;white-space:pre;letter-spacing:0px;">Memory</div>
<div style="left:722px;top:551px;width:1px;height:17px;background:#fff"></div>
<div style="left:723px;top:550px;width:39px;height:1px;background:#fff"></div>
<div style="left:762px;top:551px;width:1px;height:17px;background:#808080"></div>
<div style="left:763px;top:551px;width:1px;height:17px;background:#404040"></div>
<div style="left:728px;top:554px;font:11px 'Liberation Sans',sans-serif;line-height:13px;color:#000;white-space:pre;letter-spacing:0px;">SPD</div>
<div style="left:764px;top:551px;width:1px;height:17px;background:#fff"></div>
<div style="left:765px;top:550px;width:50px;height:1px;background:#fff"></div>
<div style="left:815px;top:551px;width:1px;height:17px;background:#808080"></div>
<div style="left:816px;top:551px;width:1px;height:17px;background:#404040"></div>
<div style="left:770px;top:554px;font:11px 'Liberation Sans',sans-serif;line-height:13px;color:#000;white-space:pre;letter-spacing:0px;">Graphics</div>
<div style="left:817px;top:551px;width:1px;height:17px;background:#fff"></div>
<div style="left:818px;top:550px;width:39px;height:1px;background:#fff"></div>
<div style="left:857px;top:551px;width:1px;height:17px;background:#808080"></div>
<div style="left:858px;top:551px;width:1px;height:17px;background:#404040"></div>
<div style="left:823px;top:554px;font:11px 'Liberation Sans',sans-serif;line-height:13px;color:#000;white-space:pre;letter-spacing:0px;">About</div>
<div style="left:519px;top:568px;width:395px;height:313px;box-sizing:border-box;background:#d4d0c8;border-left:1px solid #fff;border-top:1px solid #fff;border-right:1px solid #404040;border-bottom:1px solid #404040"><div style="position:absolute;right:0;bottom:0;left:0;top:0;border-right:1px solid #808080;border-bottom:1px solid #808080"></div></div>
<div style="left:609px;top:549px;width:64px;height:21px;background:#d4d0c8;"></div>
<div style="left:608px;top:549px;width:1px;height:20px;background:#fff"></div>
<div style="left:609px;top:548px;width:63px;height:1px;background:#fff"></div>
<div style="left:672px;top:549px;width:1px;height:20px;background:#808080"></div>
<div style="left:673px;top:549px;width:1px;height:20px;background:#404040"></div>
<div style="left:616px;top:552px;font:11px 'Liberation Sans',sans-serif;line-height:13px;color:#000;white-space:pre;letter-spacing:0px;">Mainboard</div>
<div style="left:525px;top:579px;width:385px;height:117px;box-sizing:border-box;border:1px solid #ffffff"></div>
<div style="left:524px;top:578px;width:385px;height:117px;box-sizing:border-box;border:1px solid #808080"></div>
<div style="left:531px;top:573px;height:13px;padding:0 1px;background:#d4d0c8;font:11px 'Liberation Sans',sans-serif;line-height:13px;color:#000;white-space:pre;letter-spacing:0px">Motherboard</div>
<div style="left:294px;top:593px;width:300px;text-align:right;font:11px 'Liberation Sans',sans-serif;line-height:13px;color:#000;white-space:pre;">Manufacturer</div>
<div style="left:602px;top:590px;width:296px;height:16px;box-sizing:border-box;border-style:solid;border-width:1px;border-color:#808080 #ffffff #ffffff #808080;"></div>
<div style="left:605px;top:592px;font:11px 'Liberation Sans',sans-serif;line-height:13px;color:#000080;white-space:pre;letter-spacing:0px;">EVGA</div>
<div style="left:294px;top:611px;width:300px;text-align:right;font:11px 'Liberation Sans',sans-serif;line-height:13px;color:#000;white-space:pre;">Model</div>
<div style="left:602px;top:608px;width:189px;height:16px;box-sizing:border-box;border-style:solid;border-width:1px;border-color:#808080 #ffffff #ffffff #808080;"></div>
<div style="left:605px;top:610px;font:11px 'Liberation Sans',sans-serif;line-height:13px;color:#000080;white-space:pre;letter-spacing:0px;">X58 SLI Classified</div>
<div style="left:793px;top:608px;width:105px;height:16px;box-sizing:border-box;border-style:solid;border-width:1px;border-color:#808080 #ffffff #ffffff #808080;"></div>
<div style="left:793px;top:610px;font:11px 'Liberation Sans',sans-serif;line-height:13px;color:#000080;white-space:pre;letter-spacing:0px;width:105px;text-align:center;">Tylersburg</div>
<div style="left:294px;top:633px;width:300px;text-align:right;font:11px 'Liberation Sans',sans-serif;line-height:13px;color:#000;white-space:pre;">Chipset</div>
<div style="left:602px;top:631px;width:69px;height:16px;box-sizing:border-box;border-style:solid;border-width:1px;border-color:#808080 #ffffff #ffffff #808080;"></div>
<div style="left:602px;top:633px;font:11px 'Liberation Sans',sans-serif;line-height:13px;color:#000080;white-space:pre;letter-spacing:0px;width:69px;text-align:center;">Intel</div>
<div style="left:673px;top:631px;width:156px;height:16px;box-sizing:border-box;border-style:solid;border-width:1px;border-color:#808080 #ffffff #ffffff #808080;"></div>
<div style="left:673px;top:633px;font:11px 'Liberation Sans',sans-serif;line-height:13px;color:#000080;white-space:pre;letter-spacing:0px;width:156px;text-align:center;">X58</div>
<div style="left:836px;top:634px;font:11px 'Liberation Sans',sans-serif;line-height:13px;color:#000;white-space:pre;letter-spacing:0px;">Rev.</div>
<div style="left:862px;top:631px;width:36px;height:16px;box-sizing:border-box;border-style:solid;border-width:1px;border-color:#808080 #ffffff #ffffff #808080;"></div>
<div style="left:862px;top:633px;font:11px 'Liberation Sans',sans-serif;line-height:13px;color:#000080;white-space:pre;letter-spacing:0px;width:36px;text-align:center;">13</div>
<div style="left:294px;top:651px;width:300px;text-align:right;font:11px 'Liberation Sans',sans-serif;line-height:13px;color:#000;white-space:pre;">Southbridge</div>
<div style="left:602px;top:649px;width:69px;height:16px;box-sizing:border-box;border-style:solid;border-width:1px;border-color:#808080 #ffffff #ffffff #808080;"></div>
<div style="left:602px;top:651px;font:11px 'Liberation Sans',sans-serif;line-height:13px;color:#000080;white-space:pre;letter-spacing:0px;width:69px;text-align:center;">Intel</div>
<div style="left:673px;top:649px;width:156px;height:16px;box-sizing:border-box;border-style:solid;border-width:1px;border-color:#808080 #ffffff #ffffff #808080;"></div>
<div style="left:673px;top:651px;font:11px 'Liberation Sans',sans-serif;line-height:13px;color:#000080;white-space:pre;letter-spacing:0px;width:156px;text-align:center;">82801JR (ICH10R)</div>
<div style="left:294px;top:672px;width:300px;text-align:right;font:11px 'Liberation Sans',sans-serif;line-height:13px;color:#000;white-space:pre;">LPCIO</div>
<div style="left:602px;top:670px;width:69px;height:16px;box-sizing:border-box;border-style:solid;border-width:1px;border-color:#808080 #ffffff #ffffff #808080;"></div>
<div style="left:602px;top:672px;font:11px 'Liberation Sans',sans-serif;line-height:13px;color:#000080;white-space:pre;letter-spacing:0px;width:69px;text-align:center;">Fintek</div>
<div style="left:673px;top:670px;width:156px;height:16px;box-sizing:border-box;border-style:solid;border-width:1px;border-color:#808080 #ffffff #ffffff #808080;"></div>
<div style="left:673px;top:672px;font:11px 'Liberation Sans',sans-serif;line-height:13px;color:#000080;white-space:pre;letter-spacing:0px;width:156px;text-align:center;">F71882F</div>
<div style="left:525px;top:707px;width:385px;height:72px;box-sizing:border-box;border:1px solid #ffffff"></div>
<div style="left:524px;top:706px;width:385px;height:72px;box-sizing:border-box;border:1px solid #808080"></div>
<div style="left:531px;top:701px;height:13px;padding:0 1px;background:#d4d0c8;font:11px 'Liberation Sans',sans-serif;line-height:13px;color:#000;white-space:pre;letter-spacing:0px">BIOS</div>
<div style="left:294px;top:720px;width:300px;text-align:right;font:11px 'Liberation Sans',sans-serif;line-height:13px;color:#000;white-space:pre;">Brand</div>
<div style="left:602px;top:717px;width:296px;height:16px;box-sizing:border-box;border-style:solid;border-width:1px;border-color:#808080 #ffffff #ffffff #808080;"></div>
<div style="left:605px;top:719px;font:11px 'Liberation Sans',sans-serif;line-height:13px;color:#000080;white-space:pre;letter-spacing:0px;">Phoenix Technologies, LTD</div>
<div style="left:294px;top:738px;width:300px;text-align:right;font:11px 'Liberation Sans',sans-serif;line-height:13px;color:#000;white-space:pre;">Version</div>
<div style="left:602px;top:735px;width:296px;height:16px;box-sizing:border-box;border-style:solid;border-width:1px;border-color:#808080 #ffffff #ffffff #808080;"></div>
<div style="left:605px;top:737px;font:11px 'Liberation Sans',sans-serif;line-height:13px;color:#000080;white-space:pre;letter-spacing:0px;">6.00 PG</div>
<div style="left:294px;top:756px;width:300px;text-align:right;font:11px 'Liberation Sans',sans-serif;line-height:13px;color:#000;white-space:pre;">Date</div>
<div style="left:602px;top:753px;width:296px;height:16px;box-sizing:border-box;border-style:solid;border-width:1px;border-color:#808080 #ffffff #ffffff #808080;"></div>
<div style="left:605px;top:755px;font:11px 'Liberation Sans',sans-serif;line-height:13px;color:#000080;white-space:pre;letter-spacing:0px;">09/17/2009</div>
<div style="left:525px;top:788px;width:385px;height:70px;box-sizing:border-box;border:1px solid #ffffff"></div>
<div style="left:524px;top:787px;width:385px;height:70px;box-sizing:border-box;border:1px solid #808080"></div>
<div style="left:531px;top:782px;height:13px;padding:0 1px;background:#d4d0c8;font:11px 'Liberation Sans',sans-serif;line-height:13px;color:#000;white-space:pre;letter-spacing:0px">Graphic Interface</div>
<div style="left:333px;top:799px;width:300px;text-align:right;font:11px 'Liberation Sans',sans-serif;line-height:13px;color:#000;white-space:pre;">Version</div>
<div style="left:643px;top:797px;width:254px;height:16px;box-sizing:border-box;border-style:solid;border-width:1px;border-color:#808080 #ffffff #ffffff #808080;"></div>
<div style="left:643px;top:799px;font:11px 'Liberation Sans',sans-serif;line-height:13px;color:#000080;white-space:pre;letter-spacing:0px;width:254px;text-align:center;">PCI-Express</div>
<div style="left:333px;top:817px;width:300px;text-align:right;font:11px 'Liberation Sans',sans-serif;line-height:13px;color:#000;white-space:pre;">Link Width</div>
<div style="left:643px;top:814px;width:84px;height:16px;box-sizing:border-box;border-style:solid;border-width:1px;border-color:#808080 #ffffff #ffffff #808080;"></div>
<div style="left:643px;top:816px;font:11px 'Liberation Sans',sans-serif;line-height:13px;color:#000080;white-space:pre;letter-spacing:0px;width:84px;text-align:center;">x16</div>
<div style="left:734px;top:817px;font:11px 'Liberation Sans',sans-serif;line-height:13px;color:#000;white-space:pre;letter-spacing:0px;">Max. Supported</div>
<div style="left:817px;top:814px;width:80px;height:16px;box-sizing:border-box;border-style:solid;border-width:1px;border-color:#808080 #ffffff #ffffff #808080;"></div>
<div style="left:817px;top:816px;font:11px 'Liberation Sans',sans-serif;line-height:13px;color:#000080;white-space:pre;letter-spacing:0px;width:80px;text-align:center;">x16</div>
<div style="left:333px;top:835px;width:300px;text-align:right;font:11px 'Liberation Sans',sans-serif;line-height:13px;color:#808080;white-space:pre;text-shadow:1px 1px 0 #fff">Side Band</div>
<div style="left:643px;top:832px;width:84px;height:16px;box-sizing:border-box;border-style:solid;border-width:1px;border-color:#808080 #ffffff #ffffff #808080;"></div>
<div style="left:524px;top:886px;font:italic bold 20px 'Liberation Sans',sans-serif;line-height:22px;color:#808080;letter-spacing:-0.5px;text-shadow:1px 1px 0 #fff">CPU-Z</div>
<div style="left:596px;top:892px;font:11px 'Liberation Sans',sans-serif;line-height:13px;color:#000;white-space:pre;letter-spacing:0px;">Version 1.52.2</div>
<div style="left:758px;top:886px;width:75px;height:21px;box-sizing:border-box;border-style:solid;border-width:1px;border-color:#ffffff #404040 #404040 #ffffff;"><div style="position:absolute;left:0;top:0;right:0;bottom:0;border-style:solid;border-width:1px;border-color:#d4d0c8 #808080 #808080 #d4d0c8;background:#d4d0c8"></div></div>
<div style="left:758px;top:890px;font:11px 'Liberation Sans',sans-serif;line-height:13px;color:#000;white-space:pre;letter-spacing:0px;width:75px;text-align:center;">Validate</div>
<div style="left:839px;top:886px;width:75px;height:21px;box-sizing:border-box;border-style:solid;border-width:1px;border-color:#ffffff #404040 #404040 #ffffff;"><div style="position:absolute;left:0;top:0;right:0;bottom:0;border-style:solid;border-width:1px;border-color:#d4d0c8 #808080 #808080 #d4d0c8;background:#d4d0c8"></div></div>
<div style="left:839px;top:890px;font:11px 'Liberation Sans',sans-serif;line-height:13px;color:#000;white-space:pre;letter-spacing:0px;width:75px;text-align:center;">OK</div>
<div style="left:0px;top:970px;width:926px;height:28px;background:#d4d0c8;"></div>
<div style="left:0px;top:971px;width:926px;height:1px;background:#ffffff;"></div>
<div style="left:2px;top:974px;width:52px;height:22px;box-sizing:border-box;border-style:solid;border-width:1px;border-color:#ffffff #404040 #404040 #ffffff;"><div style="position:absolute;left:0;top:0;right:0;bottom:0;border-style:solid;border-width:1px;border-color:#d4d0c8 #808080 #808080 #d4d0c8;background:#d4d0c8"></div></div>
<svg style="position:absolute;left:3px;top:976px" width="16" height="16"><path d="M5 1.5q3-1.5 6 0.5l-1.5 6q-3-2-6-0.5z" fill="#e0581c"/><path d="M12 3.5q2.5 1 5 0.2l-1.5 6q-2.5 1-5-0.2z" fill="#58b02c"/><path d="M2.5 9q3-1.5 6 0.5l-1.5 6q-3-2-6-0.5z" fill="#2a88d8"/><path d="M9.5 11q2.5 1 5 0.2l-1.5 5q-2.5 1-5-0.2z" fill="#f0b818"/></svg>
<div style="left:21px;top:979px;font:bold 12px 'Liberation Sans',sans-serif;line-height:13px;color:#000;white-space:pre;letter-spacing:0px;">Start</div>
<div style="left:59px;top:974px;width:160px;height:22px;box-sizing:border-box;border-style:solid;border-width:1px;border-color:#ffffff #404040 #404040 #ffffff;"><div style="position:absolute;left:0;top:0;right:0;bottom:0;border-style:solid;border-width:1px;border-color:#d4d0c8 #808080 #808080 #d4d0c8;background:#d4d0c8"></div></div>
<svg style="position:absolute;left:63px;top:977px" width="16" height="16" shape-rendering="crispEdges"><rect x="0" y="2" width="16" height="13" fill="#8e98a6"/><rect x="1" y="3" width="14" height="2" fill="#dfe6ee"/><rect x="10" y="3" width="1" height="1" fill="#4a6ab0"/><rect x="12" y="3" width="1" height="1" fill="#4a6ab0"/><rect x="1" y="5" width="14" height="9" fill="#000"/><path d="M3 7h3v1h-3zM2 8h1v3h-1zM3 11h3v1h-3zM6 8h1v1h-1zM6 10h1v1h-1zM7 8h1v1h-1zM7 10h1v1h-1zM9 7h1v2h-1zM10 9h1v3h-1zM12 11h3v1h-3z" fill="#fff"/></svg>
<div style="left:83px;top:979px;font:11px 'Liberation Sans',sans-serif;line-height:13px;color:#000;white-space:pre;letter-spacing:0px;">y-cruncher v0.4.2.7438 ...</div>
<div style="left:222px;top:974px;width:160px;height:22px;box-sizing:border-box;border-style:solid;border-width:1px;border-color:#ffffff #404040 #404040 #ffffff;"><div style="position:absolute;left:0;top:0;right:0;bottom:0;border-style:solid;border-width:1px;border-color:#d4d0c8 #808080 #808080 #d4d0c8;background:#d4d0c8"></div></div>
<svg style="position:absolute;left:226px;top:977px" width="16" height="16"><rect x="0.5" y="0.5" width="15" height="15" fill="#a8a8ac" stroke="#4c5e3a"/><polygon points="1,1 3,1 15,13 15,15 13,15 1,3" fill="#64c828"/><polygon points="3,1 6,1 15,10 15,13" fill="#1c1c24"/><rect x="6" y="5" width="1" height="1" fill="#8aa080"/><rect x="9" y="8" width="1" height="1" fill="#8aa080"/><rect x="11" y="10" width="1" height="1" fill="#6080b0"/><rect x="2" y="3" width="1.5" height="1.5" fill="#f0a020"/><rect x="5" y="6" width="1.5" height="1.5" fill="#f0a020"/><rect x="12" y="14" width="2" height="1.5" fill="#000"/></svg>
<div style="left:246px;top:979px;font:11px 'Liberation Sans',sans-serif;line-height:13px;color:#000;white-space:pre;letter-spacing:0px;">Cpu-tweaker</div>
<div style="left:385px;top:974px;width:160px;height:22px;box-sizing:border-box;border-style:solid;border-width:1px;border-color:#ffffff #404040 #404040 #ffffff;"><div style="position:absolute;left:0;top:0;right:0;bottom:0;border-style:solid;border-width:1px;border-color:#d4d0c8 #808080 #808080 #d4d0c8;background:#d4d0c8"></div></div>
<svg style="position:absolute;left:388px;top:978px" width="18" height="15"><defs><linearGradient id="czg" x1="0" y1="0" x2="1" y2="1"><stop offset="0" stop-color="#ffffff"/><stop offset="1" stop-color="#b8b8b8"/></linearGradient></defs><polygon points="1,5.5 8,1 17,5.5 9,12.5" fill="url(#czg)" stroke="#78b878" stroke-width="0.8"/><polyline points="1.5,6 9,12.5 16.5,6" fill="none" stroke="#2a7a2a" stroke-width="1.1"/></svg>
<div style="left:409px;top:979px;font:11px 'Liberation Sans',sans-serif;line-height:13px;color:#000;white-space:pre;letter-spacing:0px;">CPU-Z</div>
<div style="left:548px;top:974px;width:160px;height:22px;box-sizing:border-box;border-style:solid;border-width:1px;border-color:#ffffff #404040 #404040 #ffffff;"><div style="position:absolute;left:0;top:0;right:0;bottom:0;border-style:solid;border-width:1px;border-color:#d4d0c8 #808080 #808080 #d4d0c8;background:#d4d0c8"></div></div>
<svg style="position:absolute;left:551px;top:978px" width="18" height="15"><defs><linearGradient id="czg" x1="0" y1="0" x2="1" y2="1"><stop offset="0" stop-color="#ffffff"/><stop offset="1" stop-color="#b8b8b8"/></linearGradient></defs><polygon points="1,5.5 8,1 17,5.5 9,12.5" fill="url(#czg)" stroke="#78b878" stroke-width="0.8"/><polyline points="1.5,6 9,12.5 16.5,6" fill="none" stroke="#2a7a2a" stroke-width="1.1"/></svg>
<div style="left:572px;top:979px;font:11px 'Liberation Sans',sans-serif;line-height:13px;color:#000;white-space:pre;letter-spacing:0px;">CPU-Z</div>
</body></html>
